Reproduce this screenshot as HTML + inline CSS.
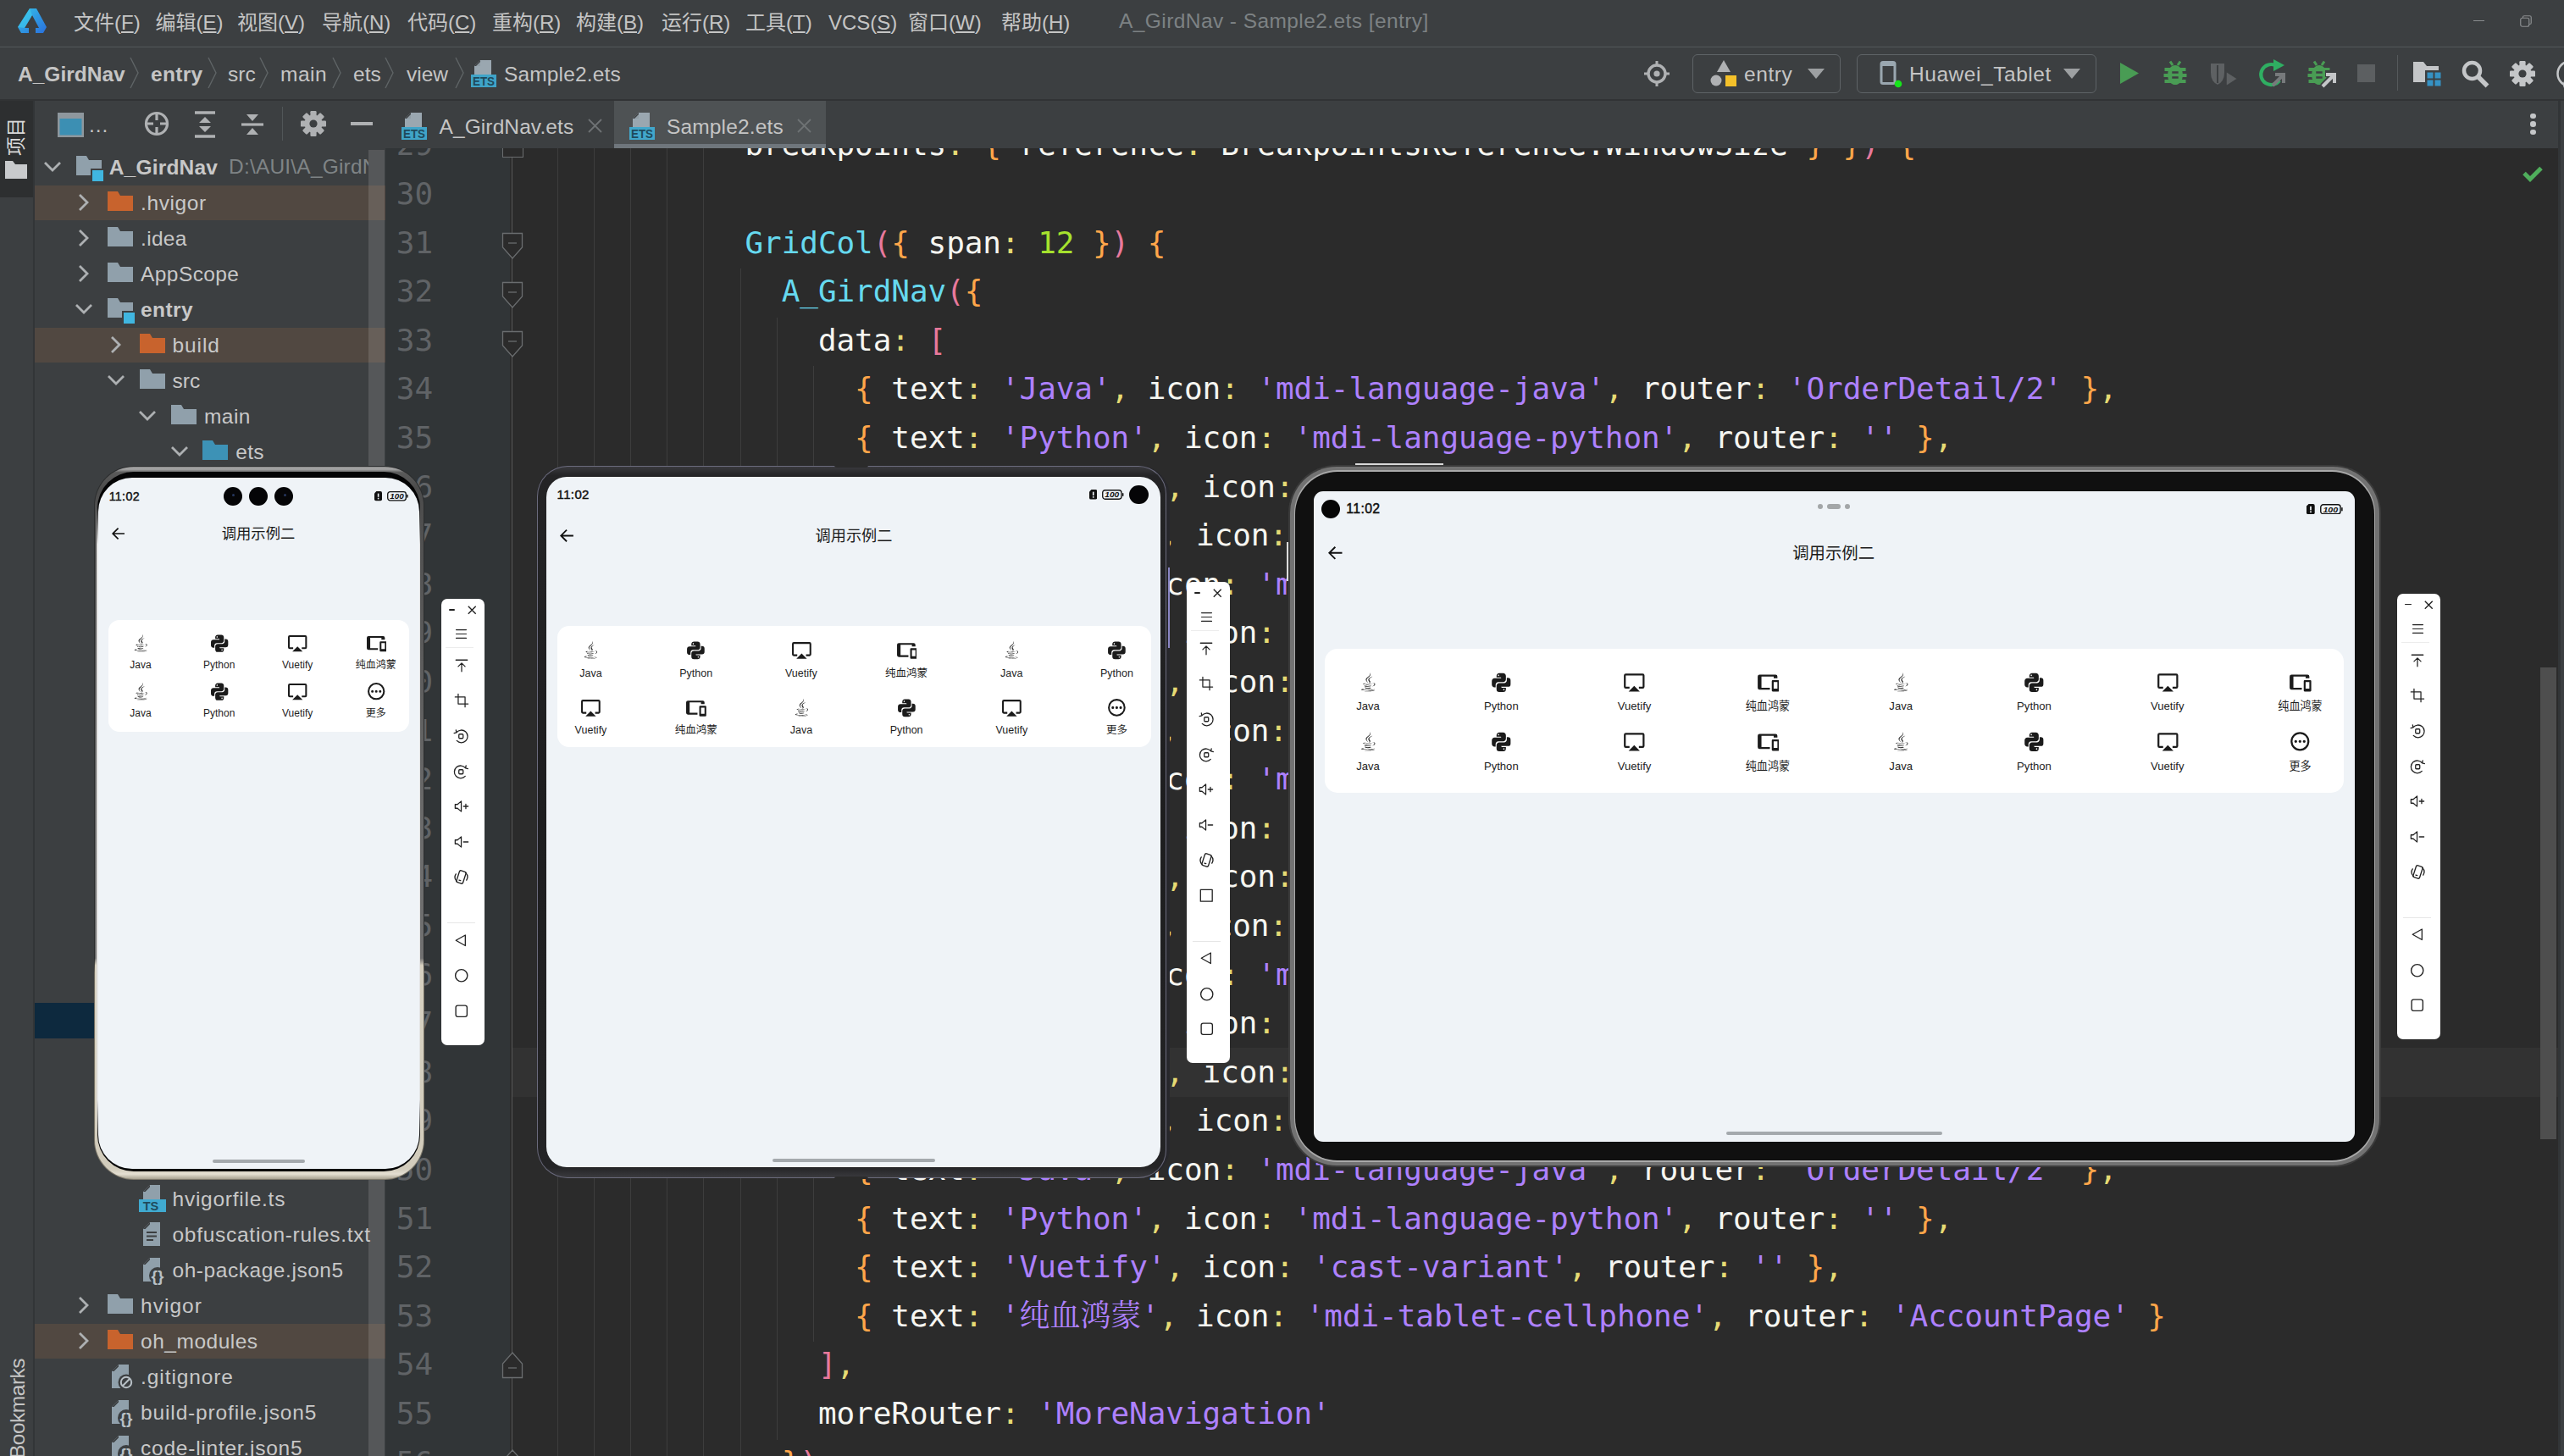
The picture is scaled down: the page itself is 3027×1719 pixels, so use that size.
<!DOCTYPE html>
<html lang="zh"><head><meta charset="utf-8"><title>A_GirdNav - Sample2.ets [entry]</title>
<style>
html,body{margin:0;padding:0}
body{width:3027px;height:1719px;overflow:hidden;background:#2b2b2b;position:relative;font-family:"Liberation Sans","Noto Sans CJK SC",sans-serif;}
div,span.t,svg.a{position:absolute;box-sizing:border-box}
span.t{white-space:pre}
.code{font-family:"DejaVu Sans Mono","Liberation Mono","Noto Serif CJK SC",monospace;font-size:36px;line-height:57.6px;letter-spacing:-0.074px;white-space:pre;color:#f6f6f1;position:absolute}
.w{color:#f6f6f1}.c{color:#66d9ef}.o{color:#ffa64a}.p{color:#e8799c}.y{color:#e6db74}.s{color:#ae81ff}.g{color:#a6e22e}
.ln{font-family:"DejaVu Sans Mono","Liberation Mono","Noto Serif CJK SC",monospace;font-size:36px;line-height:57.6px;letter-spacing:-0.074px;color:#606366;position:absolute;white-space:pre;text-align:right;width:60px}
.lab{position:absolute;text-align:center;white-space:pre;color:#1e1e1e}
</style></head><body>

<div id="editor" style="left:455px;top:175px;width:2565px;height:1544px;overflow:hidden;background:#2b2b2b">
<div style="left:0px;top:0px;width:146.5px;height:1544px;background:#313537"></div>
<div style="left:150px;top:1061.5px;width:2415px;height:58px;background:#323232"></div>
<div style="left:203px;top:-88.2px;width:1px;height:1728.0px;background:#3d3d3d"></div>
<div style="left:246px;top:-88.2px;width:1px;height:1728.0px;background:#3d3d3d"></div>
<div style="left:289px;top:-88.2px;width:1px;height:1728.0px;background:#3d3d3d"></div>
<div style="left:332px;top:-88.2px;width:1px;height:1728.0px;background:#3d3d3d"></div>
<div style="left:375px;top:-88.2px;width:1px;height:1728.0px;background:#3d3d3d"></div>
<div style="left:419px;top:142.2px;width:1px;height:1497.6px;background:#3d3d3d"></div>
<div style="left:462px;top:199.8px;width:1px;height:1324.8000000000002px;background:#3d3d3d"></div>
<div style="left:505px;top:257.4px;width:1px;height:1152.0px;background:#3d3d3d"></div>
<div style="left:149.10000000000002px;top:0px;width:1.4px;height:1544px;background:#575757"></div>
<svg class="a" style="left:136.79999999999995px;top:99.40000000000003px;" width="26" height="34" viewBox="0 0 26 34"><path d="M1.5 1.5H24.5V18L13 31L1.5 18Z" fill="#2b2b2b" stroke="#6a6d6f" stroke-width="1.3"/><path d="M8 13H18" stroke="#6a6d6f" stroke-width="1.3"/></svg>
<svg class="a" style="left:136.79999999999995px;top:157.0px;" width="26" height="34" viewBox="0 0 26 34"><path d="M1.5 1.5H24.5V18L13 31L1.5 18Z" fill="#2b2b2b" stroke="#6a6d6f" stroke-width="1.3"/><path d="M8 13H18" stroke="#6a6d6f" stroke-width="1.3"/></svg>
<svg class="a" style="left:136.79999999999995px;top:214.60000000000002px;" width="26" height="34" viewBox="0 0 26 34"><path d="M1.5 1.5H24.5V18L13 31L1.5 18Z" fill="#2b2b2b" stroke="#6a6d6f" stroke-width="1.3"/><path d="M8 13H18" stroke="#6a6d6f" stroke-width="1.3"/></svg>
<div style="left:138px;top:-25px;width:25px;height:35.5px;border:1.3px solid #6a6d6f;background:#2b2b2b"></div>
<svg class="a" style="left:136.79999999999995px;top:1418.7px;" width="26" height="34" viewBox="0 0 26 34"><path d="M1.5 32.5H24.5V16L13 3L1.5 16Z" fill="#2b2b2b" stroke="#6a6d6f" stroke-width="1.3"/><path d="M8 21H18" stroke="#6a6d6f" stroke-width="1.3"/></svg>
<svg class="a" style="left:136.79999999999995px;top:1533.9px;" width="26" height="34" viewBox="0 0 26 34"><path d="M1.5 32.5H24.5V16L13 3L1.5 16Z" fill="#2b2b2b" stroke="#6a6d6f" stroke-width="1.3"/><path d="M8 21H18" stroke="#6a6d6f" stroke-width="1.3"/></svg>
<div class="ln" style="left:-4px;top:-32.70px">29</div>
<div class="ln" style="left:-4px;top:24.90px">30</div>
<div class="ln" style="left:-4px;top:82.50px">31</div>
<div class="ln" style="left:-4px;top:140.10px">32</div>
<div class="ln" style="left:-4px;top:197.70px">33</div>
<div class="ln" style="left:-4px;top:255.30px">34</div>
<div class="ln" style="left:-4px;top:312.90px">35</div>
<div class="ln" style="left:-4px;top:370.50px">36</div>
<div class="ln" style="left:-4px;top:428.10px">37</div>
<div class="ln" style="left:-4px;top:485.70px">38</div>
<div class="ln" style="left:-4px;top:543.30px">39</div>
<div class="ln" style="left:-4px;top:600.90px">40</div>
<div class="ln" style="left:-4px;top:658.50px">41</div>
<div class="ln" style="left:-4px;top:716.10px">42</div>
<div class="ln" style="left:-4px;top:773.70px">43</div>
<div class="ln" style="left:-4px;top:831.30px">44</div>
<div class="ln" style="left:-4px;top:888.90px">45</div>
<div class="ln" style="left:-4px;top:946.50px">46</div>
<div class="ln" style="left:-4px;top:1004.10px">47</div>
<div class="ln" style="left:-4px;top:1061.70px">48</div>
<div class="ln" style="left:-4px;top:1119.30px">49</div>
<div class="ln" style="left:-4px;top:1176.90px">50</div>
<div class="ln" style="left:-4px;top:1234.50px">51</div>
<div class="ln" style="left:-4px;top:1292.10px">52</div>
<div class="ln" style="left:-4px;top:1349.70px">53</div>
<div class="ln" style="left:-4px;top:1407.30px">54</div>
<div class="ln" style="left:-4px;top:1464.90px">55</div>
<div class="ln" style="left:-4px;top:1522.50px">56</div>
<div class="ln" style="left:-4px;top:1580.10px">57</div>
<div class="code" style="left:424.50px;top:-32.70px"><span class="w">breakpoints</span><span class="y">:</span> <span class="o">{</span> <span class="w">reference</span><span class="y">:</span> <span class="w">BreakpointsReference.WindowSize</span> <span class="o">}</span> <span class="o">}</span><span class="p">)</span> <span class="o">{</span></div>
<div class="code" style="left:424.50px;top:82.50px"><span class="c">GridCol</span><span class="p">(</span><span class="o">{</span> <span class="w">span</span><span class="y">:</span> <span class="g">12</span> <span class="o">}</span><span class="p">)</span> <span class="o">{</span></div>
<div class="code" style="left:467.70px;top:140.10px"><span class="c">A_GirdNav</span><span class="p">(</span><span class="o">{</span></div>
<div class="code" style="left:510.90px;top:197.70px"><span class="w">data</span><span class="y">:</span> <span class="p">[</span></div>
<div class="code" style="left:554.10px;top:255.30px"><span class="o">{</span> <span class="w">text</span><span class="y">:</span> <span class="s">&#x27;Java&#x27;</span><span class="y">,</span> <span class="w">icon</span><span class="y">:</span> <span class="s">&#x27;mdi-language-java&#x27;</span><span class="y">,</span> <span class="w">router</span><span class="y">:</span> <span class="s">&#x27;OrderDetail/2&#x27;</span> <span class="o">}</span><span class="y">,</span></div>
<div class="code" style="left:554.10px;top:312.90px"><span class="o">{</span> <span class="w">text</span><span class="y">:</span> <span class="s">&#x27;Python&#x27;</span><span class="y">,</span> <span class="w">icon</span><span class="y">:</span> <span class="s">&#x27;mdi-language-python&#x27;</span><span class="y">,</span> <span class="w">router</span><span class="y">:</span> <span class="s">&#x27;&#x27;</span> <span class="o">}</span><span class="y">,</span></div>
<div class="code" style="left:554.10px;top:370.50px"><span class="o">{</span> <span class="w">text</span><span class="y">:</span> <span class="s">&#x27;Vuetify&#x27;</span><span class="y">,</span> <span class="w">icon</span><span class="y">:</span> <span class="s">&#x27;cast-variant&#x27;</span><span class="y">,</span> <span class="w">router</span><span class="y">:</span> <span class="s">&#x27;&#x27;</span> <span class="o">}</span><span class="y">,</span></div>
<div class="code" style="left:554.10px;top:428.10px"><span class="o">{</span> <span class="w">text</span><span class="y">:</span> <span class="s">&#x27;纯血鸿蒙&#x27;</span><span class="y">,</span> <span class="w">icon</span><span class="y">:</span> <span class="s">&#x27;mdi-tablet-cellphone&#x27;</span><span class="y">,</span> <span class="w">router</span><span class="y">:</span> <span class="s">&#x27;AccountPage&#x27;</span> <span class="o">}</span><span class="y">,</span></div>
<div class="code" style="left:554.10px;top:485.70px"><span class="o">{</span> <span class="w">text</span><span class="y">:</span> <span class="s">&#x27;Java&#x27;</span><span class="y">,</span> <span class="w">icon</span><span class="y">:</span> <span class="s">&#x27;mdi-language-java&#x27;</span><span class="y">,</span> <span class="w">router</span><span class="y">:</span> <span class="s">&#x27;OrderDetail/2&#x27;</span> <span class="o">}</span><span class="y">,</span></div>
<div class="code" style="left:554.10px;top:543.30px"><span class="o">{</span> <span class="w">text</span><span class="y">:</span> <span class="s">&#x27;Python&#x27;</span><span class="y">,</span> <span class="w">icon</span><span class="y">:</span> <span class="s">&#x27;mdi-language-python&#x27;</span><span class="y">,</span> <span class="w">router</span><span class="y">:</span> <span class="s">&#x27;&#x27;</span> <span class="o">}</span><span class="y">,</span></div>
<div class="code" style="left:554.10px;top:600.90px"><span class="o">{</span> <span class="w">text</span><span class="y">:</span> <span class="s">&#x27;Vuetify&#x27;</span><span class="y">,</span> <span class="w">icon</span><span class="y">:</span> <span class="s">&#x27;cast-variant&#x27;</span><span class="y">,</span> <span class="w">router</span><span class="y">:</span> <span class="s">&#x27;&#x27;</span> <span class="o">}</span><span class="y">,</span></div>
<div class="code" style="left:554.10px;top:658.50px"><span class="o">{</span> <span class="w">text</span><span class="y">:</span> <span class="s">&#x27;纯血鸿蒙&#x27;</span><span class="y">,</span> <span class="w">icon</span><span class="y">:</span> <span class="s">&#x27;mdi-tablet-cellphone&#x27;</span><span class="y">,</span> <span class="w">router</span><span class="y">:</span> <span class="s">&#x27;AccountPage&#x27;</span> <span class="o">}</span><span class="y">,</span></div>
<div class="code" style="left:554.10px;top:716.10px"><span class="o">{</span> <span class="w">text</span><span class="y">:</span> <span class="s">&#x27;Java&#x27;</span><span class="y">,</span> <span class="w">icon</span><span class="y">:</span> <span class="s">&#x27;mdi-language-java&#x27;</span><span class="y">,</span> <span class="w">router</span><span class="y">:</span> <span class="s">&#x27;OrderDetail/2&#x27;</span> <span class="o">}</span><span class="y">,</span></div>
<div class="code" style="left:554.10px;top:773.70px"><span class="o">{</span> <span class="w">text</span><span class="y">:</span> <span class="s">&#x27;Python&#x27;</span><span class="y">,</span> <span class="w">icon</span><span class="y">:</span> <span class="s">&#x27;mdi-language-python&#x27;</span><span class="y">,</span> <span class="w">router</span><span class="y">:</span> <span class="s">&#x27;&#x27;</span> <span class="o">}</span><span class="y">,</span></div>
<div class="code" style="left:554.10px;top:831.30px"><span class="o">{</span> <span class="w">text</span><span class="y">:</span> <span class="s">&#x27;Vuetify&#x27;</span><span class="y">,</span> <span class="w">icon</span><span class="y">:</span> <span class="s">&#x27;cast-variant&#x27;</span><span class="y">,</span> <span class="w">router</span><span class="y">:</span> <span class="s">&#x27;&#x27;</span> <span class="o">}</span><span class="y">,</span></div>
<div class="code" style="left:554.10px;top:888.90px"><span class="o">{</span> <span class="w">text</span><span class="y">:</span> <span class="s">&#x27;纯血鸿蒙&#x27;</span><span class="y">,</span> <span class="w">icon</span><span class="y">:</span> <span class="s">&#x27;mdi-tablet-cellphone&#x27;</span><span class="y">,</span> <span class="w">router</span><span class="y">:</span> <span class="s">&#x27;AccountPage&#x27;</span> <span class="o">}</span><span class="y">,</span></div>
<div class="code" style="left:554.10px;top:946.50px"><span class="o">{</span> <span class="w">text</span><span class="y">:</span> <span class="s">&#x27;Java&#x27;</span><span class="y">,</span> <span class="w">icon</span><span class="y">:</span> <span class="s">&#x27;mdi-language-java&#x27;</span><span class="y">,</span> <span class="w">router</span><span class="y">:</span> <span class="s">&#x27;OrderDetail/2&#x27;</span> <span class="o">}</span><span class="y">,</span></div>
<div class="code" style="left:554.10px;top:1004.10px"><span class="o">{</span> <span class="w">text</span><span class="y">:</span> <span class="s">&#x27;Python&#x27;</span><span class="y">,</span> <span class="w">icon</span><span class="y">:</span> <span class="s">&#x27;mdi-language-python&#x27;</span><span class="y">,</span> <span class="w">router</span><span class="y">:</span> <span class="s">&#x27;&#x27;</span> <span class="o">}</span><span class="y">,</span></div>
<div class="code" style="left:554.10px;top:1061.70px"><span class="o">{</span> <span class="w">text</span><span class="y">:</span> <span class="s">&#x27;Vuetify&#x27;</span><span class="y">,</span> <span class="w">icon</span><span class="y">:</span> <span class="s">&#x27;cast-variant&#x27;</span><span class="y">,</span> <span class="w">router</span><span class="y">:</span> <span class="s">&#x27;&#x27;</span> <span class="o">}</span><span class="y">,</span></div>
<div class="code" style="left:554.10px;top:1119.30px"><span class="o">{</span> <span class="w">text</span><span class="y">:</span> <span class="s">&#x27;纯血鸿蒙&#x27;</span><span class="y">,</span> <span class="w">icon</span><span class="y">:</span> <span class="s">&#x27;mdi-tablet-cellphone&#x27;</span><span class="y">,</span> <span class="w">router</span><span class="y">:</span> <span class="s">&#x27;AccountPage&#x27;</span> <span class="o">}</span><span class="y">,</span></div>
<div class="code" style="left:554.10px;top:1176.90px"><span class="o">{</span> <span class="w">text</span><span class="y">:</span> <span class="s">&#x27;Java&#x27;</span><span class="y">,</span> <span class="w">icon</span><span class="y">:</span> <span class="s">&#x27;mdi-language-java&#x27;</span><span class="y">,</span> <span class="w">router</span><span class="y">:</span> <span class="s">&#x27;OrderDetail/2&#x27;</span> <span class="o">}</span><span class="y">,</span></div>
<div class="code" style="left:554.10px;top:1234.50px"><span class="o">{</span> <span class="w">text</span><span class="y">:</span> <span class="s">&#x27;Python&#x27;</span><span class="y">,</span> <span class="w">icon</span><span class="y">:</span> <span class="s">&#x27;mdi-language-python&#x27;</span><span class="y">,</span> <span class="w">router</span><span class="y">:</span> <span class="s">&#x27;&#x27;</span> <span class="o">}</span><span class="y">,</span></div>
<div class="code" style="left:554.10px;top:1292.10px"><span class="o">{</span> <span class="w">text</span><span class="y">:</span> <span class="s">&#x27;Vuetify&#x27;</span><span class="y">,</span> <span class="w">icon</span><span class="y">:</span> <span class="s">&#x27;cast-variant&#x27;</span><span class="y">,</span> <span class="w">router</span><span class="y">:</span> <span class="s">&#x27;&#x27;</span> <span class="o">}</span><span class="y">,</span></div>
<div class="code" style="left:554.10px;top:1349.70px"><span class="o">{</span> <span class="w">text</span><span class="y">:</span> <span class="s">&#x27;纯血鸿蒙&#x27;</span><span class="y">,</span> <span class="w">icon</span><span class="y">:</span> <span class="s">&#x27;mdi-tablet-cellphone&#x27;</span><span class="y">,</span> <span class="w">router</span><span class="y">:</span> <span class="s">&#x27;AccountPage&#x27;</span> <span class="o">}</span></div>
<div class="code" style="left:510.90px;top:1407.30px"><span class="p">]</span><span class="y">,</span></div>
<div class="code" style="left:510.90px;top:1464.90px"><span class="w">moreRouter</span><span class="y">:</span> <span class="s">&#x27;MoreNavigation&#x27;</span></div>
<div class="code" style="left:467.70px;top:1522.50px"><span class="o">}</span><span class="p">)</span></div>
<div style="left:2544px;top:613px;width:19px;height:557px;background:#4e4e4e"></div>
<svg class="a" style="left:2522px;top:19px;" width="26" height="22" viewBox="0 0 26 22"><path d="M3 10.5L10 17.5L23 4.5" fill="none" stroke="#4fae5c" stroke-width="5"/></svg>
</div>
<div style="left:0px;top:0px;width:3027px;height:55px;background:#3c3f41"></div>
<div style="left:0px;top:55px;width:3027px;height:1px;background:#53585a"></div>
<div style="left:0px;top:56px;width:3027px;height:62px;background:#3c3f41"></div>
<div style="left:0px;top:117px;width:3027px;height:2px;background:#313335"></div>
<svg class="a" style="left:20px;top:8px;" width="36" height="32" viewBox="0 0 36 32"><defs><linearGradient id="lg1" x1="0" y1="0" x2="1" y2="1"><stop offset="0" stop-color="#35c3e8"/><stop offset="1" stop-color="#2a6fdc"/></linearGradient></defs>
<path d="M15 2L23 2L35 24L31 31L22 31L22 25L26 25L18 10L9 25L14 25L14 31L5 31L1 24Z" fill="url(#lg1)"/><path d="M15 2L18 10L9 25L1 24Z" fill="#3fd0ee" opacity=".55"/></svg>
<span class="t" style="left:87px;top:7.20px;line-height:40px;font-size:24px;color:#c5c5c5;">文件(<u>F</u>)</span>
<span class="t" style="left:183.5px;top:7.20px;line-height:40px;font-size:24px;color:#c5c5c5;">编辑(<u>E</u>)</span>
<span class="t" style="left:280px;top:7.20px;line-height:40px;font-size:24px;color:#c5c5c5;">视图(<u>V</u>)</span>
<span class="t" style="left:380px;top:7.20px;line-height:40px;font-size:24px;color:#c5c5c5;">导航(<u>N</u>)</span>
<span class="t" style="left:481px;top:7.20px;line-height:40px;font-size:24px;color:#c5c5c5;">代码(<u>C</u>)</span>
<span class="t" style="left:581px;top:7.20px;line-height:40px;font-size:24px;color:#c5c5c5;">重构(<u>R</u>)</span>
<span class="t" style="left:680px;top:7.20px;line-height:40px;font-size:24px;color:#c5c5c5;">构建(<u>B</u>)</span>
<span class="t" style="left:781px;top:7.20px;line-height:40px;font-size:24px;color:#c5c5c5;">运行(<u>R</u>)</span>
<span class="t" style="left:880px;top:7.20px;line-height:40px;font-size:24px;color:#c5c5c5;">工具(<u>T</u>)</span>
<span class="t" style="left:978px;top:7.20px;line-height:40px;font-size:24px;color:#c5c5c5;">VCS(<u>S</u>)</span>
<span class="t" style="left:1072px;top:7.20px;line-height:40px;font-size:24px;color:#c5c5c5;">窗口(<u>W</u>)</span>
<span class="t" style="left:1182px;top:7.20px;line-height:40px;font-size:24px;color:#c5c5c5;">帮助(<u>H</u>)</span>
<span class="t" style="left:1321px;top:5.20px;line-height:40px;font-size:24.5px;color:#7d8284;letter-spacing:0.42px">A_GirdNav - Sample2.ets [entry]</span>
<div style="left:2920px;top:24px;width:13px;height:1px;background:#8a8d8f"></div>
<svg class="a" style="left:2975px;top:18px;" width="14" height="14" viewBox="0 0 14 14"><rect x="0.75" y="3.25" width="10" height="10" rx="2" fill="none" stroke="#8a8d8f" stroke-width="1.2"/><path d="M3.5 3V2.2Q3.5 0.75 5 0.75H11.5Q13.25 0.75 13.25 2.5V9Q13.25 10.5 11.8 10.5H11" fill="none" stroke="#8a8d8f" stroke-width="1.2"/></svg>
<span class="t" style="left:21px;top:68.20px;line-height:40px;font-size:24.5px;color:#c5c5c5;font-weight:bold">A_GirdNav</span>
<svg class="a" style="left:153px;top:67px;" width="11" height="38" viewBox="0 0 11 38"><path d="M1 1L10 19L1 37" fill="none" stroke="#5f6466" stroke-width="1.4"/></svg>
<span class="t" style="left:178px;top:68.20px;line-height:40px;font-size:24.5px;color:#c5c5c5;font-weight:bold;letter-spacing:0.3px">entry</span>
<svg class="a" style="left:245px;top:67px;" width="11" height="38" viewBox="0 0 11 38"><path d="M1 1L10 19L1 37" fill="none" stroke="#5f6466" stroke-width="1.4"/></svg>
<span class="t" style="left:269px;top:68.20px;line-height:40px;font-size:24.5px;color:#c5c5c5;">src</span>
<svg class="a" style="left:306px;top:67px;" width="11" height="38" viewBox="0 0 11 38"><path d="M1 1L10 19L1 37" fill="none" stroke="#5f6466" stroke-width="1.4"/></svg>
<span class="t" style="left:331px;top:68.20px;line-height:40px;font-size:24.5px;color:#c5c5c5;letter-spacing:0.5px">main</span>
<svg class="a" style="left:392px;top:67px;" width="11" height="38" viewBox="0 0 11 38"><path d="M1 1L10 19L1 37" fill="none" stroke="#5f6466" stroke-width="1.4"/></svg>
<span class="t" style="left:417px;top:68.20px;line-height:40px;font-size:24.5px;color:#c5c5c5;">ets</span>
<svg class="a" style="left:454px;top:67px;" width="11" height="38" viewBox="0 0 11 38"><path d="M1 1L10 19L1 37" fill="none" stroke="#5f6466" stroke-width="1.4"/></svg>
<span class="t" style="left:480px;top:68.20px;line-height:40px;font-size:24.5px;color:#c5c5c5;">view</span>
<svg class="a" style="left:537px;top:67px;" width="11" height="38" viewBox="0 0 11 38"><path d="M1 1L10 19L1 37" fill="none" stroke="#5f6466" stroke-width="1.4"/></svg>
<svg class="a" style="left:556px;top:71px;" width="30" height="32" viewBox="0 0 30 32"><path d="M11 0H24V17H4V7Z" fill="#9aa7b0"/><path d="M11 0V7H4Z" fill="#3c3f41"/><path d="M11.5 1.5V8H5Z" fill="#9aa7b0" opacity=".9"/>
<rect x="0" y="17" width="30" height="15" fill="#40b6e0" opacity=".85"/><text x="15" y="30" font-family="Liberation Sans,sans-serif" font-size="14.5" font-weight="bold" fill="#1f4a5c" text-anchor="middle" textLength="26" lengthAdjust="spacingAndGlyphs">ETS</text></svg>
<span class="t" style="left:595px;top:68.20px;line-height:40px;font-size:24.5px;color:#c5c5c5;letter-spacing:0.15px">Sample2.ets</span>
<svg class="a" style="left:1940px;top:71px;" width="32" height="32" viewBox="0 0 32 32"><circle cx="16" cy="16" r="10" fill="none" stroke="#afb1b3" stroke-width="3.4"/><circle cx="16" cy="16" r="3.6" fill="#afb1b3"/><path d="M16 1V6M16 26V31M1 16H6M26 16H31" stroke="#afb1b3" stroke-width="3"/></svg>
<div style="left:1998px;top:64px;width:175px;height:46px;border:1.5px solid #5e6366;border-radius:6px"></div>
<svg class="a" style="left:2018px;top:70px;" width="34" height="34" viewBox="0 0 34 34"><path d="M17 1L25 15H9Z" fill="#afb1b3"/><circle cx="8" cy="25" r="6.5" fill="#afb1b3"/><rect x="19" y="19" width="13" height="13" fill="#f4c12a"/></svg>
<span class="t" style="left:2059px;top:68.20px;line-height:40px;font-size:24.5px;color:#c5c5c5;letter-spacing:0.6px">entry</span>
<svg class="a" style="left:2134px;top:81px;" width="20" height="12" viewBox="0 0 20 12"><path d="M0 0H20L10 12Z" fill="#9da0a2"/></svg>
<div style="left:2192px;top:64px;width:283px;height:46px;border:1.5px solid #5e6366;border-radius:6px"></div>
<svg class="a" style="left:2219px;top:72px;" width="30" height="34" viewBox="0 0 30 34"><rect x="2" y="1.5" width="16" height="25" rx="2" fill="none" stroke="#9aa7b0" stroke-width="3"/><rect x="3" y="3" width="14" height="3" fill="#9aa7b0"/><circle cx="22" cy="27" r="4.3" fill="#17e41b"/></svg>
<span class="t" style="left:2254px;top:68.20px;line-height:40px;font-size:24.5px;color:#c5c5c5;letter-spacing:0.55px">Huawei_Tablet</span>
<svg class="a" style="left:2436px;top:81px;" width="20" height="12" viewBox="0 0 20 12"><path d="M0 0H20L10 12Z" fill="#9da0a2"/></svg>
<svg class="a" style="left:2502px;top:73px;" width="24" height="27" viewBox="0 0 24 27"><path d="M1 1L23 13.5L1 26Z" fill="#499c54"/></svg>
<svg class="a" style="left:2552px;top:70px;" width="32" height="32" viewBox="0 0 32 32"><path d="M10 2.5L13 7M22 2.5L19 7" stroke="#499c54" stroke-width="3"/><path d="M3.5 12H28.5M2.5 19H29.5M3.5 26H28.5" stroke="#499c54" stroke-width="4"/><ellipse cx="16" cy="18.5" rx="9" ry="11.5" fill="#499c54"/><path d="M12.3 15.5H19.7M12.3 21.5H19.7" stroke="#3c3f41" stroke-width="2.6"/></svg>
<svg class="a" style="left:2608px;top:72px;" width="36" height="32" viewBox="0 0 36 32"><path d="M2 3H18V14Q18 24 10 28Q2 24 2 14Z" fill="#5e6163"/><path d="M10 5V26" stroke="#3c3f41" stroke-width="2"/><path d="M20 12L34 21L20 30Z" fill="#5e6163" stroke="#3c3f41" stroke-width="1.5"/></svg>
<svg class="a" style="left:2664px;top:70px;" width="36" height="34" viewBox="0 0 36 34"><path d="M22 7A12 12 0 1 0 27 25" fill="none" stroke="#2fae62" stroke-width="4.2"/><path d="M20 0L33 7L20 14Z" fill="#2fae62"/><path d="M19 31L31 19M22 18H32V28" stroke="#777a7c" stroke-width="4" fill="none"/></svg>
<svg class="a" style="left:2722px;top:70px;" width="38" height="34" viewBox="0 0 38 34"><path d="M10 2.5L13 7M22 2.5L19 7" stroke="#499c54" stroke-width="3"/><path d="M3.5 12H28.5M2.5 19H29.5M3.5 26H28.5" stroke="#499c54" stroke-width="4"/><ellipse cx="16" cy="18.5" rx="9" ry="11.5" fill="#499c54"/><path d="M12.3 15.5H19.7M12.3 21.5H19.7" stroke="#3c3f41" stroke-width="2.6"/><path d="M20 32L33 19M23 17H35V29" stroke="#3c3f41" stroke-width="8" fill="none"/><path d="M20 32L33 19M24 18H34V28" stroke="#c4c6c8" stroke-width="4" fill="none"/></svg>
<div style="left:2783px;top:76px;width:21px;height:21px;background:#5c5f61"></div>
<div style="left:2830px;top:65px;width:1px;height:42px;background:#55595b"></div>
<svg class="a" style="left:2848px;top:72px;" width="36" height="32" viewBox="0 0 36 32"><path d="M1 1H13L17 6H31V25H1Z" fill="#c4c6c8"/><rect x="15" y="11" width="20" height="20" fill="#3c3f41"/><rect x="17.5" y="13.5" width="7" height="7" fill="#3592c4"/><rect x="26.5" y="13.5" width="7" height="7" fill="#3592c4"/><rect x="17.5" y="22.5" width="7" height="7" fill="#3592c4"/><rect x="26.5" y="22.5" width="7" height="7" fill="#3592c4"/></svg>
<svg class="a" style="left:2905px;top:70px;" width="34" height="34" viewBox="0 0 34 34"><circle cx="13.5" cy="13.5" r="9.5" fill="none" stroke="#c4c6c8" stroke-width="4.5"/><path d="M20.5 20.5L31.5 31.5" stroke="#c4c6c8" stroke-width="5.5"/></svg>
<svg class="a" style="left:2962px;top:71px;" width="32" height="32" viewBox="0 0 32 32"><g transform="translate(16,16)"><g fill="#c4c6c8"><rect x="-3.6" y="-15" width="7.2" height="30" rx="1.2" transform="rotate(0)"/><rect x="-3.6" y="-15" width="7.2" height="30" rx="1.2" transform="rotate(45)"/><rect x="-3.6" y="-15" width="7.2" height="30" rx="1.2" transform="rotate(90)"/><rect x="-3.6" y="-15" width="7.2" height="30" rx="1.2" transform="rotate(135)"/></g><circle r="10.5" fill="#c4c6c8"/><circle r="4.6" fill="#3c3f41"/></g></svg>
<svg class="a" style="left:3017px;top:70px;" width="12" height="34" viewBox="0 0 12 34"><circle cx="17" cy="17" r="14.5" fill="none" stroke="#c4c6c8" stroke-width="2.5"/><circle cx="17" cy="30" r="8" fill="#c4c6c8"/></svg>
<div style="left:0px;top:119px;width:39px;height:1600px;background:#3c3f41"></div>
<div style="left:0px;top:119px;width:39px;height:114px;background:#2d2f30"></div>
<div style="left:39px;top:119px;width:2px;height:1600px;background:#323537"></div>
<span class="t" style="left:0px;top:138px;width:39px;height:46px;writing-mode:vertical-rl;text-orientation:sideways;transform:rotate(180deg);font-size:22.5px;line-height:39px;color:#d8d8d8;text-align:center">项目</span>
<svg class="a" style="left:6px;top:190px;" width="26" height="21" viewBox="0 0 26 21"><path d="M0 0H9L12 4H26V21H0Z" fill="#c8cacc"/></svg>
<span class="t" style="left:1px;top:1604px;width:39px;height:118px;writing-mode:vertical-rl;text-orientation:sideways;transform:rotate(180deg);font-size:24.5px;line-height:39px;color:#c5c5c5;letter-spacing:-0.5px">Bookmarks</span>
<div style="left:41px;top:119px;width:414px;height:1600px;background:#3c3f41"></div>
<svg class="a" style="left:68px;top:133px;" width="31" height="29" viewBox="0 0 31 29"><rect x="1.25" y="1.25" width="28.5" height="26.5" fill="#3c8fb3" stroke="#8e979d" stroke-width="2.5"/><rect x="1" y="1" width="29" height="6" fill="#8e979d"/></svg>
<span class="t" style="left:105px;top:128.20px;line-height:40px;font-size:24.5px;color:#c5c5c5;letter-spacing:1px">...</span>
<svg class="a" style="left:170px;top:131px;" width="30" height="30" viewBox="0 0 30 30"><circle cx="15" cy="15" r="12.5" fill="none" stroke="#afb1b3" stroke-width="3.2"/><path d="M15 2V11M15 19V28M2 15H11M19 15H28" stroke="#afb1b3" stroke-width="3.2"/></svg>
<svg class="a" style="left:228px;top:131px;" width="28" height="32" viewBox="0 0 28 32"><path d="M2 2H26M2 30H26" stroke="#afb1b3" stroke-width="3.6"/><path d="M14 7L21 14H7ZM14 25L21 18H7Z" fill="#afb1b3"/></svg>
<svg class="a" style="left:284px;top:131px;" width="28" height="32" viewBox="0 0 28 32"><path d="M1 16H27" stroke="#afb1b3" stroke-width="3.2"/><path d="M14 12L21 4H7ZM14 20L21 28H7Z" fill="#afb1b3"/></svg>
<div style="left:333px;top:126px;width:1px;height:40px;background:#515658"></div>
<svg class="a" style="left:354px;top:130px;" width="32" height="32" viewBox="0 0 32 32"><g transform="translate(16,16)"><g fill="#afb1b3"><rect x="-3.6" y="-15" width="7.2" height="30" rx="1.2" transform="rotate(0)"/><rect x="-3.6" y="-15" width="7.2" height="30" rx="1.2" transform="rotate(45)"/><rect x="-3.6" y="-15" width="7.2" height="30" rx="1.2" transform="rotate(90)"/><rect x="-3.6" y="-15" width="7.2" height="30" rx="1.2" transform="rotate(135)"/></g><circle r="10.5" fill="#afb1b3"/><circle r="4.6" fill="#3c3f41"/></g></svg>
<div style="left:414px;top:144px;width:26px;height:4px;background:#afb1b3"></div>
<div style="left:41px;top:1184px;width:414px;height:42px;background:#0d293e"></div>
<svg class="a" style="left:50.5px;top:190.0px;" width="22" height="14" viewBox="0 0 22 14"><path d="M2 2L11 11L20 2" fill="none" stroke="#adb0b2" stroke-width="2.8"/></svg>
<svg class="a" style="left:90.0px;top:184.0px;" width="34" height="32" viewBox="0 0 34 32"><path d="M0 0H12L15 5H30V23H0Z" fill="#90a0ab"/><rect x="17" y="15" width="16" height="16" fill="#3c3f41"/><rect x="19" y="17" width="13" height="13" fill="#40b6e0"/></svg>
<span class="t" style="left:128.7px;top:177.20px;line-height:42px;font-size:24.5px;color:#c8c8c8;font-weight:bold;letter-spacing:0.2px">A_GirdNav</span>
<span class="t" style="left:270px;top:176px;line-height:42px;font-size:24.5px;color:#7f8486;width:165px;overflow:hidden;letter-spacing:0.2px">D:\AUI\A_GirdNav</span>
<div style="left:41px;top:219px;width:414px;height:41px;background:#514841"></div>
<svg class="a" style="left:92.0px;top:228.0px;" width="14" height="22" viewBox="0 0 14 22"><path d="M2 2L11 11L2 20" fill="none" stroke="#adb0b2" stroke-width="2.8"/></svg>
<svg class="a" style="left:127.3px;top:226.0px;" width="34" height="32" viewBox="0 0 34 32"><path d="M0 0H12L15 5H30V23H0Z" fill="#c8632d"/></svg>
<span class="t" style="left:166.1px;top:219.20px;line-height:42px;font-size:24.5px;color:#c8c8c8;letter-spacing:0.6px">.hvigor</span>
<svg class="a" style="left:92.0px;top:270.0px;" width="14" height="22" viewBox="0 0 14 22"><path d="M2 2L11 11L2 20" fill="none" stroke="#adb0b2" stroke-width="2.8"/></svg>
<svg class="a" style="left:127.3px;top:268.0px;" width="34" height="32" viewBox="0 0 34 32"><path d="M0 0H12L15 5H30V23H0Z" fill="#90a0ab"/></svg>
<span class="t" style="left:166.1px;top:261.20px;line-height:42px;font-size:24.5px;color:#c8c8c8;letter-spacing:0.3px">.idea</span>
<svg class="a" style="left:92.0px;top:312.0px;" width="14" height="22" viewBox="0 0 14 22"><path d="M2 2L11 11L2 20" fill="none" stroke="#adb0b2" stroke-width="2.8"/></svg>
<svg class="a" style="left:127.3px;top:310.0px;" width="34" height="32" viewBox="0 0 34 32"><path d="M0 0H12L15 5H30V23H0Z" fill="#90a0ab"/></svg>
<span class="t" style="left:166.1px;top:303.20px;line-height:42px;font-size:24.5px;color:#c8c8c8;letter-spacing:0.4px">AppScope</span>
<svg class="a" style="left:88.0px;top:358.0px;" width="22" height="14" viewBox="0 0 22 14"><path d="M2 2L11 11L20 2" fill="none" stroke="#adb0b2" stroke-width="2.8"/></svg>
<svg class="a" style="left:127.3px;top:352.0px;" width="34" height="32" viewBox="0 0 34 32"><path d="M0 0H12L15 5H30V23H0Z" fill="#90a0ab"/><rect x="17" y="15" width="16" height="16" fill="#3c3f41"/><rect x="19" y="17" width="13" height="13" fill="#40b6e0"/></svg>
<span class="t" style="left:166.1px;top:345.20px;line-height:42px;font-size:24.5px;color:#c8c8c8;font-weight:bold;letter-spacing:0.4px">entry</span>
<div style="left:41px;top:387px;width:414px;height:41px;background:#514841"></div>
<svg class="a" style="left:129.5px;top:396.0px;" width="14" height="22" viewBox="0 0 14 22"><path d="M2 2L11 11L2 20" fill="none" stroke="#adb0b2" stroke-width="2.8"/></svg>
<svg class="a" style="left:164.6px;top:394.0px;" width="34" height="32" viewBox="0 0 34 32"><path d="M0 0H12L15 5H30V23H0Z" fill="#c8632d"/></svg>
<span class="t" style="left:203.5px;top:387.20px;line-height:42px;font-size:24.5px;color:#c8c8c8;letter-spacing:0.9px">build</span>
<svg class="a" style="left:125.5px;top:442.0px;" width="22" height="14" viewBox="0 0 22 14"><path d="M2 2L11 11L20 2" fill="none" stroke="#adb0b2" stroke-width="2.8"/></svg>
<svg class="a" style="left:164.6px;top:436.0px;" width="34" height="32" viewBox="0 0 34 32"><path d="M0 0H12L15 5H30V23H0Z" fill="#90a0ab"/></svg>
<span class="t" style="left:203.5px;top:429.20px;line-height:42px;font-size:24.5px;color:#c8c8c8;letter-spacing:0px">src</span>
<svg class="a" style="left:163.0px;top:484.0px;" width="22" height="14" viewBox="0 0 22 14"><path d="M2 2L11 11L20 2" fill="none" stroke="#adb0b2" stroke-width="2.8"/></svg>
<svg class="a" style="left:201.89999999999998px;top:478.0px;" width="34" height="32" viewBox="0 0 34 32"><path d="M0 0H12L15 5H30V23H0Z" fill="#90a0ab"/></svg>
<span class="t" style="left:240.89999999999998px;top:471.20px;line-height:42px;font-size:24.5px;color:#c8c8c8;letter-spacing:0.5px">main</span>
<svg class="a" style="left:200.5px;top:526.0px;" width="22" height="14" viewBox="0 0 22 14"><path d="M2 2L11 11L20 2" fill="none" stroke="#adb0b2" stroke-width="2.8"/></svg>
<svg class="a" style="left:239.2px;top:520.0px;" width="34" height="32" viewBox="0 0 34 32"><path d="M0 0H12L15 5H30V23H0Z" fill="#3d92b6"/></svg>
<span class="t" style="left:278.29999999999995px;top:513.20px;line-height:42px;font-size:24.5px;color:#c8c8c8;letter-spacing:0.3px">ets</span>
<svg class="a" style="left:163.6px;top:1399.0px;" width="32" height="32" viewBox="0 0 32 32"><path d="M13 0H25V17H5V8Z" fill="#90a0ab"/><path d="M13 0V8H5Z" fill="#3c3f41"/><path d="M13.7 1.8V8.7H6.8Z" fill="#90a0ab"/><rect x="0" y="17" width="32" height="15" fill="#40b6e0" opacity=".9"/><text x="14" y="30" font-family="Liberation Sans,sans-serif" font-size="14.5" font-weight="bold" fill="#1f4a5c" text-anchor="middle">TS</text></svg>
<span class="t" style="left:203.5px;top:1395.20px;line-height:42px;font-size:24.5px;color:#c8c8c8;letter-spacing:0.75px">hvigorfile.ts</span>
<svg class="a" style="left:167.6px;top:1443.0px;" width="24" height="30" viewBox="0 0 24 30"><path d="M9 0H21V28H1V8Z" fill="#90a0ab"/><path d="M9 0V8H1Z" fill="#3c3f41"/><path d="M9.7 1.8V8.7H2.8Z" fill="#90a0ab"/><path d="M5 12H17M5 16.5H17M5 21H13" stroke="#3c3f41" stroke-width="2"/></svg>
<span class="t" style="left:203.5px;top:1437.20px;line-height:42px;font-size:24.5px;color:#c8c8c8;letter-spacing:0.72px">obfuscation-rules.txt</span>
<svg class="a" style="left:167.6px;top:1485.0px;" width="30" height="34" viewBox="0 0 30 34"><path d="M9 0H21V28H1V8Z" fill="#90a0ab"/><path d="M9 0V8H1Z" fill="#3c3f41"/><path d="M9.7 1.8V8.7H2.8Z" fill="#90a0ab"/><circle cx="18" cy="21" r="10" fill="#3c3f41"/><text x="18" y="28" font-family="Liberation Sans,sans-serif" font-size="19" font-weight="bold" fill="#b8c0c6" text-anchor="middle">{}</text></svg>
<span class="t" style="left:203.5px;top:1479.20px;line-height:42px;font-size:24.5px;color:#c8c8c8;letter-spacing:0.55px">oh-package.json5</span>
<svg class="a" style="left:92.0px;top:1530.0px;" width="14" height="22" viewBox="0 0 14 22"><path d="M2 2L11 11L2 20" fill="none" stroke="#adb0b2" stroke-width="2.8"/></svg>
<svg class="a" style="left:127.3px;top:1528.0px;" width="34" height="32" viewBox="0 0 34 32"><path d="M0 0H12L15 5H30V23H0Z" fill="#90a0ab"/></svg>
<span class="t" style="left:166.1px;top:1521.20px;line-height:42px;font-size:24.5px;color:#c8c8c8;letter-spacing:1.0px">hvigor</span>
<div style="left:41px;top:1563px;width:414px;height:41px;background:#514841"></div>
<svg class="a" style="left:92.0px;top:1572.0px;" width="14" height="22" viewBox="0 0 14 22"><path d="M2 2L11 11L2 20" fill="none" stroke="#adb0b2" stroke-width="2.8"/></svg>
<svg class="a" style="left:127.3px;top:1570.0px;" width="34" height="32" viewBox="0 0 34 32"><path d="M0 0H12L15 5H30V23H0Z" fill="#c8632d"/></svg>
<span class="t" style="left:166.1px;top:1563.20px;line-height:42px;font-size:24.5px;color:#c8c8c8;letter-spacing:0.5px">oh_modules</span>
<svg class="a" style="left:130.8px;top:1611.0px;" width="30" height="34" viewBox="0 0 30 34"><path d="M9 0H21V28H1V8Z" fill="#90a0ab"/><path d="M9 0V8H1Z" fill="#3c3f41"/><path d="M9.7 1.8V8.7H2.8Z" fill="#90a0ab"/><circle cx="18" cy="21" r="9.5" fill="#3c3f41"/><circle cx="18" cy="21" r="6.2" fill="none" stroke="#b8c0c6" stroke-width="2"/><path d="M13.8 25.2L22.2 16.8" stroke="#b8c0c6" stroke-width="2"/></svg>
<span class="t" style="left:166.1px;top:1605.20px;line-height:42px;font-size:24.5px;color:#c8c8c8;letter-spacing:0.9px">.gitignore</span>
<svg class="a" style="left:130.8px;top:1653.0px;" width="30" height="34" viewBox="0 0 30 34"><path d="M9 0H21V28H1V8Z" fill="#90a0ab"/><path d="M9 0V8H1Z" fill="#3c3f41"/><path d="M9.7 1.8V8.7H2.8Z" fill="#90a0ab"/><circle cx="18" cy="21" r="10" fill="#3c3f41"/><text x="18" y="28" font-family="Liberation Sans,sans-serif" font-size="19" font-weight="bold" fill="#b8c0c6" text-anchor="middle">{}</text></svg>
<span class="t" style="left:166.1px;top:1647.20px;line-height:42px;font-size:24.5px;color:#c8c8c8;letter-spacing:0.85px">build-profile.json5</span>
<svg class="a" style="left:130.8px;top:1695.0px;" width="30" height="34" viewBox="0 0 30 34"><path d="M9 0H21V28H1V8Z" fill="#90a0ab"/><path d="M9 0V8H1Z" fill="#3c3f41"/><path d="M9.7 1.8V8.7H2.8Z" fill="#90a0ab"/><circle cx="18" cy="21" r="10" fill="#3c3f41"/><text x="18" y="28" font-family="Liberation Sans,sans-serif" font-size="19" font-weight="bold" fill="#b8c0c6" text-anchor="middle">{}</text></svg>
<span class="t" style="left:166.1px;top:1689.20px;line-height:42px;font-size:24.5px;color:#c8c8c8;letter-spacing:0.75px">code-linter.json5</span>
<div style="left:435px;top:177px;width:19px;height:1542px;background:rgba(255,255,255,0.13)"></div>
<div style="left:455px;top:119px;width:2565px;height:56px;background:#3c3f41"></div>
<div style="left:725px;top:119px;width:250px;height:56px;background:#4e5254"></div>
<div style="left:725px;top:170px;width:250px;height:5px;background:#6f767c"></div>
<svg class="a" style="left:474px;top:133px;" width="30" height="32" viewBox="0 0 30 32"><path d="M11 0H24V17H4V7Z" fill="#9aa7b0"/><path d="M11 0V7H4Z" fill="#3c3f41"/><path d="M11.5 1.5V8H5Z" fill="#9aa7b0" opacity=".9"/>
<rect x="0" y="17" width="30" height="15" fill="#40b6e0" opacity=".85"/><text x="15" y="30" font-family="Liberation Sans,sans-serif" font-size="14.5" font-weight="bold" fill="#1f4a5c" text-anchor="middle" textLength="26" lengthAdjust="spacingAndGlyphs">ETS</text></svg>
<span class="t" style="left:518.5px;top:130.20px;line-height:40px;font-size:24.5px;color:#c5c5c5;letter-spacing:0.1px">A_GirdNav.ets</span>
<svg class="a" style="left:694px;top:140px;" width="17" height="17" viewBox="0 0 17 17"><path d="M1 1L16 16M16 1L1 16" stroke="#6e7274" stroke-width="1.8"/></svg>
<svg class="a" style="left:743px;top:133px;" width="30" height="32" viewBox="0 0 30 32"><path d="M11 0H24V17H4V7Z" fill="#9aa7b0"/><path d="M11 0V7H4Z" fill="#3c3f41"/><path d="M11.5 1.5V8H5Z" fill="#9aa7b0" opacity=".9"/>
<rect x="0" y="17" width="30" height="15" fill="#40b6e0" opacity=".85"/><text x="15" y="30" font-family="Liberation Sans,sans-serif" font-size="14.5" font-weight="bold" fill="#1f4a5c" text-anchor="middle" textLength="26" lengthAdjust="spacingAndGlyphs">ETS</text></svg>
<span class="t" style="left:787px;top:130.20px;line-height:40px;font-size:24.5px;color:#c5c5c5;letter-spacing:0.15px">Sample2.ets</span>
<svg class="a" style="left:941px;top:140px;" width="17" height="17" viewBox="0 0 17 17"><path d="M1 1L16 16M16 1L1 16" stroke="#6e7274" stroke-width="1.8"/></svg>
<div style="left:2987px;top:133.7px;width:6.6px;height:6.6px;background:#c4c6c8;border-radius:50%"></div>
<div style="left:2987px;top:143.2px;width:6.6px;height:6.6px;background:#c4c6c8;border-radius:50%"></div>
<div style="left:2987px;top:152.7px;width:6.6px;height:6.6px;background:#c4c6c8;border-radius:50%"></div>
<div style="left:3020px;top:119px;width:7px;height:1600px;background:#3c3f41"></div>
<div style="left:3020px;top:119px;width:3px;height:1600px;background:#323537"></div>
<div style="left:110.5px;top:549.5px;width:390px;height:843.5px;border-radius:47px;background:linear-gradient(180deg,#2b2d2e 0,#2b2d2e 69%,#6f6a5e 71%,#7d786b 100%)"></div>
<div style="left:111.5px;top:550.5px;width:388px;height:841.5px;border-radius:46px;background:linear-gradient(180deg,#8d8d8d 0,#a8a8a8 0.35%,#5a5a5a 0.8%,#4c4c4c 3%,#6a6a6a 50%,#707070 69%,#d6d0c0 70%,#d2ccbc 98.6%,#e4dfd2 99.3%,#a8a291 100%)"></div>
<div style="left:114.7px;top:556.5px;width:381.1px;height:826.3px;border-radius:43px;background:#040405"></div>
<div style="left:114.4px;top:598px;width:1.2px;height:745px;background:linear-gradient(180deg,rgba(235,235,235,0),#e4e4e4 6%,#e4e4e4 94%,rgba(235,235,235,0))"></div>
<div style="left:495px;top:598px;width:1.2px;height:745px;background:linear-gradient(180deg,rgba(235,235,235,0),#e4e4e4 6%,#e4e4e4 94%,rgba(235,235,235,0))"></div>
<div style="left:115.5px;top:564px;width:379.5px;height:815.5px;border-radius:40px;background:#eff3f7"></div>
<span class="t" style="left:128.7px;top:575.5px;line-height:20px;font-size:14.2px;color:#111;-webkit-text-stroke:0.45px #111;letter-spacing:0.35px">11:02</span>
<div style="left:263.6px;top:574.6px;width:22px;height:22px;border-radius:50%;background:#050507"></div>
<div style="left:294px;top:574.6px;width:22px;height:22px;border-radius:50%;background:#050507"></div>
<div style="left:324.4px;top:574.6px;width:22px;height:22px;border-radius:50%;background:#050507"></div>
<div style="left:273.9px;top:583px;width:3.2px;height:3.2px;border-radius:50%;background:#26365f"></div>
<div style="left:334.59999999999997px;top:583px;width:3.2px;height:3.2px;border-radius:50%;background:#26365f"></div>
<svg class="a" style="left:456.5px;top:580.2px;" width="25.0" height="11.6" viewBox="0 0 25 11.6"><rect x="0.7" y="0.7" width="21.6" height="10.2" rx="2.8" fill="none" stroke="#111" stroke-width="1.3"/><rect x="23.3" y="3.8" width="1.4" height="4" rx="0.7" fill="#111"/><text x="11.4" y="9" font-family="Liberation Sans,sans-serif" font-weight="bold" font-style="italic" font-size="8.6" text-anchor="middle" fill="#111" textLength="16.5" lengthAdjust="spacingAndGlyphs">100</text></svg>
<svg class="a" style="left:441.5px;top:580.4px;" width="9.0" height="11.2" viewBox="0 0 9 11.2"><path d="M2.4 0H7.2Q9 0 9 1.8V9.4Q9 11.2 7.2 11.2H1.8Q0 11.2 0 9.4V2.4Z" fill="#111"/><rect x="3.8" y="2.6" width="1.6" height="4.2" fill="#eff3f7"/><rect x="3.8" y="7.8" width="1.6" height="1.6" fill="#eff3f7"/></svg>
<svg class="a" style="left:131.8px;top:622.0px;" width="16.0" height="16.0" viewBox="0 0 16 16"><path d="M15 8H1.6M7.6 1.6L1.2 8L7.6 14.4" fill="none" stroke="#111" stroke-width="1.7"/></svg>
<span class="t" style="left:205px;width:200px;text-align:center;top:615px;line-height:30px;font-size:17.3px;color:#1a1a1a">调用示例二</span>
<div style="left:128px;top:732px;width:354.5px;height:132px;background:#fff;border-radius:13px"></div>
<svg class="a" style="left:153.8px;top:747.3px;" width="24.4" height="24.4" viewBox="0 0 24 24"><path d="M16.5,6.08C16.5,6.08 9.66,7.79 12.94,11.56C13.91,12.67 12.69,13.67 12.69,13.67C12.69,13.67 15.14,12.42 14,10.82C12.94,9.35 12.14,8.62 16.5,6.08M12.03,7.28C16.08,4.08 14,2 14,2C14.84,5.3 11.04,6.3 9.67,8.36C8.73,9.76 10.13,11.27 12,13C11.29,11.3 8.78,9.84 12.03,7.28M9.37,17.47C6.29,18.33 11.25,20.1 15.16,18.43C14.78,18.28 14.41,18.1 14.06,17.89C12.7,18.2 11.3,18.26 9.92,18.07C8.61,17.91 9.37,17.47 9.37,17.47M14.69,15.79C12.94,16.17 11.13,16.26 9.35,16.05C8.04,15.92 8.9,15.28 8.9,15.28C5.5,16.41 10.78,17.68 15.5,16.3C15.21,16.19 14.93,16 14.69,15.79M18.11,19.09C18.11,19.09 18.68,19.56 17.5,19.92C15.22,20.6 8.07,20.81 6.09,19.95C5.38,19.64 6.72,19.21 7.14,19.12C7.37,19.06 7.6,19.04 7.83,19.04C7.04,18.5 2.7,20.14 5.64,20.6C13.61,21.9 20.18,20 18.11,19.09M15.37,14.23C15.66,14.04 15.97,13.88 16.29,13.74C16.29,13.74 14.78,14 13.27,14.14C11.67,14.3 10.06,14.32 8.46,14.2C6.11,13.89 9.75,13 9.75,13C8.65,12.97 7.57,13.26 6.63,13.83C4.57,14.83 11.72,15.28 15.37,14.23M16.27,16.65C16.25,16.69 16.23,16.72 16.19,16.75C21.2,15.44 19.36,12.11 16.96,12.94C16.83,13 16.72,13.08 16.64,13.2C16.78,13.15 16.92,13.11 17.07,13.08C18.28,12.83 20,14.7 16.27,16.65M16.4,21.26C13.39,21.78 10.31,21.82 7.28,21.4C7.28,21.4 7.74,21.78 10.09,21.93C13.69,22.16 19.22,21.8 19.35,20.1C19.38,20.11 19.12,20.75 16.4,21.26Z" fill="#2c2c2c"/></svg>
<span class="lab" style="left:116px;width:100px;top:775px;line-height:20px;font-size:12px">Java</span>
<svg class="a" style="left:246.5px;top:747.3px;" width="24.4" height="24.4" viewBox="0 0 24 24"><path d="M19.14,7.5A2.86,2.86 0 0,1 22,10.36V14.14A2.86,2.86 0 0,1 19.14,17H12C12,17.39 12.32,17.96 12.71,17.96H17V19.64A2.86,2.86 0 0,1 14.14,22.5H9.86A2.86,2.86 0 0,1 7,19.64V15.89C7,14.31 8.28,13.04 9.86,13.04H15.11C16.69,13.04 17.96,11.76 17.96,10.18V7.5H19.14M14.86,19.29C14.46,19.29 14.14,19.59 14.14,20.18C14.14,20.77 14.46,20.89 14.86,20.89A0.71,0.71 0 0,0 15.57,20.18C15.57,19.59 15.25,19.29 14.86,19.29M4.86,17.5C3.28,17.5 2,16.22 2,14.64V10.86C2,9.28 3.28,8 4.86,8H12C12,7.61 11.68,7.04 11.29,7.04H7V5.36C7,3.78 8.28,2.5 9.86,2.5H14.14C15.72,2.5 17,3.78 17,5.36V9.11C17,10.69 15.72,11.96 14.14,11.96H8.89C7.31,11.96 6.04,13.24 6.04,14.82V17.5H4.86M9.14,5.71C9.54,5.71 9.86,5.41 9.86,4.82C9.86,4.23 9.54,4.11 9.14,4.11C8.75,4.11 8.43,4.23 8.43,4.82C8.43,5.41 8.75,5.71 9.14,5.71Z" fill="#1b1b1b"/></svg>
<span class="lab" style="left:208.7px;width:100px;top:775px;line-height:20px;font-size:12px">Python</span>
<svg class="a" style="left:339.0px;top:747.3px;" width="24.4" height="24.4" viewBox="0 0 24 24"><path d="M6,22H18L12,16M21,3H3A2,2 0 0,0 1,5V17A2,2 0 0,0 3,19H7V17H3V5H21V17H17V19H21A2,2 0 0,0 23,17V5A2,2 0 0,0 21,3Z" fill="#1b1b1b"/></svg>
<span class="lab" style="left:301.2px;width:100px;top:775px;line-height:20px;font-size:12px">Vuetify</span>
<svg class="a" style="left:431.5px;top:747.3px;" width="24.4" height="24.4" viewBox="0 0 24 24"><path d="M3,4H20A2,2 0 0,1 22,6V8H18V6H5V18H14V20H3A2,2 0 0,1 1,18V6A2,2 0 0,1 3,4M17,10H23A1,1 0 0,1 24,11V21A1,1 0 0,1 23,22H17A1,1 0 0,1 16,21V11A1,1 0 0,1 17,10M18,12V19H22V12H18Z" fill="#1b1b1b"/></svg>
<span class="lab" style="left:393.7px;width:100px;top:775px;line-height:20px;font-size:12px">纯血鸿蒙</span>
<svg class="a" style="left:153.8px;top:803.8px;" width="24.4" height="24.4" viewBox="0 0 24 24"><path d="M16.5,6.08C16.5,6.08 9.66,7.79 12.94,11.56C13.91,12.67 12.69,13.67 12.69,13.67C12.69,13.67 15.14,12.42 14,10.82C12.94,9.35 12.14,8.62 16.5,6.08M12.03,7.28C16.08,4.08 14,2 14,2C14.84,5.3 11.04,6.3 9.67,8.36C8.73,9.76 10.13,11.27 12,13C11.29,11.3 8.78,9.84 12.03,7.28M9.37,17.47C6.29,18.33 11.25,20.1 15.16,18.43C14.78,18.28 14.41,18.1 14.06,17.89C12.7,18.2 11.3,18.26 9.92,18.07C8.61,17.91 9.37,17.47 9.37,17.47M14.69,15.79C12.94,16.17 11.13,16.26 9.35,16.05C8.04,15.92 8.9,15.28 8.9,15.28C5.5,16.41 10.78,17.68 15.5,16.3C15.21,16.19 14.93,16 14.69,15.79M18.11,19.09C18.11,19.09 18.68,19.56 17.5,19.92C15.22,20.6 8.07,20.81 6.09,19.95C5.38,19.64 6.72,19.21 7.14,19.12C7.37,19.06 7.6,19.04 7.83,19.04C7.04,18.5 2.7,20.14 5.64,20.6C13.61,21.9 20.18,20 18.11,19.09M15.37,14.23C15.66,14.04 15.97,13.88 16.29,13.74C16.29,13.74 14.78,14 13.27,14.14C11.67,14.3 10.06,14.32 8.46,14.2C6.11,13.89 9.75,13 9.75,13C8.65,12.97 7.57,13.26 6.63,13.83C4.57,14.83 11.72,15.28 15.37,14.23M16.27,16.65C16.25,16.69 16.23,16.72 16.19,16.75C21.2,15.44 19.36,12.11 16.96,12.94C16.83,13 16.72,13.08 16.64,13.2C16.78,13.15 16.92,13.11 17.07,13.08C18.28,12.83 20,14.7 16.27,16.65M16.4,21.26C13.39,21.78 10.31,21.82 7.28,21.4C7.28,21.4 7.74,21.78 10.09,21.93C13.69,22.16 19.22,21.8 19.35,20.1C19.38,20.11 19.12,20.75 16.4,21.26Z" fill="#2c2c2c"/></svg>
<span class="lab" style="left:116px;width:100px;top:832px;line-height:20px;font-size:12px">Java</span>
<svg class="a" style="left:246.5px;top:803.8px;" width="24.4" height="24.4" viewBox="0 0 24 24"><path d="M19.14,7.5A2.86,2.86 0 0,1 22,10.36V14.14A2.86,2.86 0 0,1 19.14,17H12C12,17.39 12.32,17.96 12.71,17.96H17V19.64A2.86,2.86 0 0,1 14.14,22.5H9.86A2.86,2.86 0 0,1 7,19.64V15.89C7,14.31 8.28,13.04 9.86,13.04H15.11C16.69,13.04 17.96,11.76 17.96,10.18V7.5H19.14M14.86,19.29C14.46,19.29 14.14,19.59 14.14,20.18C14.14,20.77 14.46,20.89 14.86,20.89A0.71,0.71 0 0,0 15.57,20.18C15.57,19.59 15.25,19.29 14.86,19.29M4.86,17.5C3.28,17.5 2,16.22 2,14.64V10.86C2,9.28 3.28,8 4.86,8H12C12,7.61 11.68,7.04 11.29,7.04H7V5.36C7,3.78 8.28,2.5 9.86,2.5H14.14C15.72,2.5 17,3.78 17,5.36V9.11C17,10.69 15.72,11.96 14.14,11.96H8.89C7.31,11.96 6.04,13.24 6.04,14.82V17.5H4.86M9.14,5.71C9.54,5.71 9.86,5.41 9.86,4.82C9.86,4.23 9.54,4.11 9.14,4.11C8.75,4.11 8.43,4.23 8.43,4.82C8.43,5.41 8.75,5.71 9.14,5.71Z" fill="#1b1b1b"/></svg>
<span class="lab" style="left:208.7px;width:100px;top:832px;line-height:20px;font-size:12px">Python</span>
<svg class="a" style="left:339.0px;top:803.8px;" width="24.4" height="24.4" viewBox="0 0 24 24"><path d="M6,22H18L12,16M21,3H3A2,2 0 0,0 1,5V17A2,2 0 0,0 3,19H7V17H3V5H21V17H17V19H21A2,2 0 0,0 23,17V5A2,2 0 0,0 21,3Z" fill="#1b1b1b"/></svg>
<span class="lab" style="left:301.2px;width:100px;top:832px;line-height:20px;font-size:12px">Vuetify</span>
<svg class="a" style="left:431.5px;top:803.8px;" width="24.4" height="24.4" viewBox="0 0 24 24"><path d="M12,2A10,10 0 0,1 22,12A10,10 0 0,1 12,22A10,10 0 0,1 2,12A10,10 0 0,1 12,2M12,4A8,8 0 0,0 4,12A8,8 0 0,0 12,20A8,8 0 0,0 20,12A8,8 0 0,0 12,4M12,10.5A1.5,1.5 0 0,1 13.5,12A1.5,1.5 0 0,1 12,13.5A1.5,1.5 0 0,1 10.5,12A1.5,1.5 0 0,1 12,10.5M7.5,10.5A1.5,1.5 0 0,1 9,12A1.5,1.5 0 0,1 7.5,13.5A1.5,1.5 0 0,1 6,12A1.5,1.5 0 0,1 7.5,10.5M16.5,10.5A1.5,1.5 0 0,1 18,12A1.5,1.5 0 0,1 16.5,13.5A1.5,1.5 0 0,1 15,12A1.5,1.5 0 0,1 16.5,10.5Z" fill="#1b1b1b"/></svg>
<span class="lab" style="left:393.7px;width:100px;top:832px;line-height:20px;font-size:12px">更多</span>
<div style="left:251px;top:1368.7px;width:108.5px;height:4.6px;border-radius:2.3px;background:#a4a9ad"></div>
<div style="left:634px;top:550px;width:746.5px;height:841px;border-radius:36px;background:#27272c"></div>
<div style="left:634px;top:550px;width:742.6px;height:841px;border-radius:36px 33px 33px 36px;background:#6a6a7c"></div>
<div style="left:635px;top:551px;width:740.6px;height:839px;border-radius:35px 32px 32px 35px;background:linear-gradient(180deg,#3a3a3e 0,#242426 1.2%,#1d1d1f 50%,#242426 98.6%,#3a3a3e 100%)"></div>
<div style="left:985px;top:549px;width:40px;height:3px;background:#2b2b2b;border-radius:0 0 20px 20px"></div>
<div style="left:985px;top:1389px;width:40px;height:3px;background:#2b2b2b;border-radius:20px 20px 0 0"></div>
<div style="left:645px;top:563px;width:725px;height:815px;border-radius:24px;background:#eff3f7"></div>
<span class="t" style="left:657.6px;top:573.5px;line-height:20px;font-size:15px;color:#111;-webkit-text-stroke:0.45px #111;letter-spacing:0.35px">11:02</span>
<div style="left:1333.3px;top:572.8px;width:22.4px;height:22.4px;border-radius:50%;background:#050507"></div>
<svg class="a" style="left:1301.265px;top:578.026px;" width="25.75" height="11.948" viewBox="0 0 25 11.6"><rect x="0.7" y="0.7" width="21.6" height="10.2" rx="2.8" fill="none" stroke="#111" stroke-width="1.3"/><rect x="23.3" y="3.8" width="1.4" height="4" rx="0.7" fill="#111"/><text x="11.4" y="9" font-family="Liberation Sans,sans-serif" font-weight="bold" font-style="italic" font-size="8.6" text-anchor="middle" fill="#111" textLength="16.5" lengthAdjust="spacingAndGlyphs">100</text></svg>
<svg class="a" style="left:1285.815px;top:578.232px;" width="9.27" height="11.536" viewBox="0 0 9 11.2"><path d="M2.4 0H7.2Q9 0 9 1.8V9.4Q9 11.2 7.2 11.2H1.8Q0 11.2 0 9.4V2.4Z" fill="#111"/><rect x="3.8" y="2.6" width="1.6" height="4.2" fill="#eff3f7"/><rect x="3.8" y="7.8" width="1.6" height="1.6" fill="#eff3f7"/></svg>
<svg class="a" style="left:661px;top:624.02px;" width="16.96" height="16.96" viewBox="0 0 16 16"><path d="M15 8H1.6M7.6 1.6L1.2 8L7.6 14.4" fill="none" stroke="#111" stroke-width="1.7"/></svg>
<span class="t" style="left:908px;width:200px;text-align:center;top:617.5px;line-height:30px;font-size:18.2px;color:#1a1a1a">调用示例二</span>
<div style="left:657.5px;top:739px;width:701.5px;height:143px;background:#fff;border-radius:14px"></div>
<svg class="a" style="left:685.1px;top:755.1px;" width="24.8" height="24.8" viewBox="0 0 24 24"><path d="M16.5,6.08C16.5,6.08 9.66,7.79 12.94,11.56C13.91,12.67 12.69,13.67 12.69,13.67C12.69,13.67 15.14,12.42 14,10.82C12.94,9.35 12.14,8.62 16.5,6.08M12.03,7.28C16.08,4.08 14,2 14,2C14.84,5.3 11.04,6.3 9.67,8.36C8.73,9.76 10.13,11.27 12,13C11.29,11.3 8.78,9.84 12.03,7.28M9.37,17.47C6.29,18.33 11.25,20.1 15.16,18.43C14.78,18.28 14.41,18.1 14.06,17.89C12.7,18.2 11.3,18.26 9.92,18.07C8.61,17.91 9.37,17.47 9.37,17.47M14.69,15.79C12.94,16.17 11.13,16.26 9.35,16.05C8.04,15.92 8.9,15.28 8.9,15.28C5.5,16.41 10.78,17.68 15.5,16.3C15.21,16.19 14.93,16 14.69,15.79M18.11,19.09C18.11,19.09 18.68,19.56 17.5,19.92C15.22,20.6 8.07,20.81 6.09,19.95C5.38,19.64 6.72,19.21 7.14,19.12C7.37,19.06 7.6,19.04 7.83,19.04C7.04,18.5 2.7,20.14 5.64,20.6C13.61,21.9 20.18,20 18.11,19.09M15.37,14.23C15.66,14.04 15.97,13.88 16.29,13.74C16.29,13.74 14.78,14 13.27,14.14C11.67,14.3 10.06,14.32 8.46,14.2C6.11,13.89 9.75,13 9.75,13C8.65,12.97 7.57,13.26 6.63,13.83C4.57,14.83 11.72,15.28 15.37,14.23M16.27,16.65C16.25,16.69 16.23,16.72 16.19,16.75C21.2,15.44 19.36,12.11 16.96,12.94C16.83,13 16.72,13.08 16.64,13.2C16.78,13.15 16.92,13.11 17.07,13.08C18.28,12.83 20,14.7 16.27,16.65M16.4,21.26C13.39,21.78 10.31,21.82 7.28,21.4C7.28,21.4 7.74,21.78 10.09,21.93C13.69,22.16 19.22,21.8 19.35,20.1C19.38,20.11 19.12,20.75 16.4,21.26Z" fill="#2c2c2c"/></svg>
<span class="lab" style="left:647.5px;width:100px;top:785px;line-height:20px;font-size:12.5px">Java</span>
<svg class="a" style="left:809.3000000000001px;top:755.1px;" width="24.8" height="24.8" viewBox="0 0 24 24"><path d="M19.14,7.5A2.86,2.86 0 0,1 22,10.36V14.14A2.86,2.86 0 0,1 19.14,17H12C12,17.39 12.32,17.96 12.71,17.96H17V19.64A2.86,2.86 0 0,1 14.14,22.5H9.86A2.86,2.86 0 0,1 7,19.64V15.89C7,14.31 8.28,13.04 9.86,13.04H15.11C16.69,13.04 17.96,11.76 17.96,10.18V7.5H19.14M14.86,19.29C14.46,19.29 14.14,19.59 14.14,20.18C14.14,20.77 14.46,20.89 14.86,20.89A0.71,0.71 0 0,0 15.57,20.18C15.57,19.59 15.25,19.29 14.86,19.29M4.86,17.5C3.28,17.5 2,16.22 2,14.64V10.86C2,9.28 3.28,8 4.86,8H12C12,7.61 11.68,7.04 11.29,7.04H7V5.36C7,3.78 8.28,2.5 9.86,2.5H14.14C15.72,2.5 17,3.78 17,5.36V9.11C17,10.69 15.72,11.96 14.14,11.96H8.89C7.31,11.96 6.04,13.24 6.04,14.82V17.5H4.86M9.14,5.71C9.54,5.71 9.86,5.41 9.86,4.82C9.86,4.23 9.54,4.11 9.14,4.11C8.75,4.11 8.43,4.23 8.43,4.82C8.43,5.41 8.75,5.71 9.14,5.71Z" fill="#1b1b1b"/></svg>
<span class="lab" style="left:771.7px;width:100px;top:785px;line-height:20px;font-size:12.5px">Python</span>
<svg class="a" style="left:933.5px;top:755.1px;" width="24.8" height="24.8" viewBox="0 0 24 24"><path d="M6,22H18L12,16M21,3H3A2,2 0 0,0 1,5V17A2,2 0 0,0 3,19H7V17H3V5H21V17H17V19H21A2,2 0 0,0 23,17V5A2,2 0 0,0 21,3Z" fill="#1b1b1b"/></svg>
<span class="lab" style="left:895.9px;width:100px;top:785px;line-height:20px;font-size:12.5px">Vuetify</span>
<svg class="a" style="left:1057.6999999999998px;top:755.1px;" width="24.8" height="24.8" viewBox="0 0 24 24"><path d="M3,4H20A2,2 0 0,1 22,6V8H18V6H5V18H14V20H3A2,2 0 0,1 1,18V6A2,2 0 0,1 3,4M17,10H23A1,1 0 0,1 24,11V21A1,1 0 0,1 23,22H17A1,1 0 0,1 16,21V11A1,1 0 0,1 17,10M18,12V19H22V12H18Z" fill="#1b1b1b"/></svg>
<span class="lab" style="left:1020.0999999999999px;width:100px;top:785px;line-height:20px;font-size:12.5px">纯血鸿蒙</span>
<svg class="a" style="left:1181.8999999999999px;top:755.1px;" width="24.8" height="24.8" viewBox="0 0 24 24"><path d="M16.5,6.08C16.5,6.08 9.66,7.79 12.94,11.56C13.91,12.67 12.69,13.67 12.69,13.67C12.69,13.67 15.14,12.42 14,10.82C12.94,9.35 12.14,8.62 16.5,6.08M12.03,7.28C16.08,4.08 14,2 14,2C14.84,5.3 11.04,6.3 9.67,8.36C8.73,9.76 10.13,11.27 12,13C11.29,11.3 8.78,9.84 12.03,7.28M9.37,17.47C6.29,18.33 11.25,20.1 15.16,18.43C14.78,18.28 14.41,18.1 14.06,17.89C12.7,18.2 11.3,18.26 9.92,18.07C8.61,17.91 9.37,17.47 9.37,17.47M14.69,15.79C12.94,16.17 11.13,16.26 9.35,16.05C8.04,15.92 8.9,15.28 8.9,15.28C5.5,16.41 10.78,17.68 15.5,16.3C15.21,16.19 14.93,16 14.69,15.79M18.11,19.09C18.11,19.09 18.68,19.56 17.5,19.92C15.22,20.6 8.07,20.81 6.09,19.95C5.38,19.64 6.72,19.21 7.14,19.12C7.37,19.06 7.6,19.04 7.83,19.04C7.04,18.5 2.7,20.14 5.64,20.6C13.61,21.9 20.18,20 18.11,19.09M15.37,14.23C15.66,14.04 15.97,13.88 16.29,13.74C16.29,13.74 14.78,14 13.27,14.14C11.67,14.3 10.06,14.32 8.46,14.2C6.11,13.89 9.75,13 9.75,13C8.65,12.97 7.57,13.26 6.63,13.83C4.57,14.83 11.72,15.28 15.37,14.23M16.27,16.65C16.25,16.69 16.23,16.72 16.19,16.75C21.2,15.44 19.36,12.11 16.96,12.94C16.83,13 16.72,13.08 16.64,13.2C16.78,13.15 16.92,13.11 17.07,13.08C18.28,12.83 20,14.7 16.27,16.65M16.4,21.26C13.39,21.78 10.31,21.82 7.28,21.4C7.28,21.4 7.74,21.78 10.09,21.93C13.69,22.16 19.22,21.8 19.35,20.1C19.38,20.11 19.12,20.75 16.4,21.26Z" fill="#2c2c2c"/></svg>
<span class="lab" style="left:1144.3px;width:100px;top:785px;line-height:20px;font-size:12.5px">Java</span>
<svg class="a" style="left:1306.1px;top:755.1px;" width="24.8" height="24.8" viewBox="0 0 24 24"><path d="M19.14,7.5A2.86,2.86 0 0,1 22,10.36V14.14A2.86,2.86 0 0,1 19.14,17H12C12,17.39 12.32,17.96 12.71,17.96H17V19.64A2.86,2.86 0 0,1 14.14,22.5H9.86A2.86,2.86 0 0,1 7,19.64V15.89C7,14.31 8.28,13.04 9.86,13.04H15.11C16.69,13.04 17.96,11.76 17.96,10.18V7.5H19.14M14.86,19.29C14.46,19.29 14.14,19.59 14.14,20.18C14.14,20.77 14.46,20.89 14.86,20.89A0.71,0.71 0 0,0 15.57,20.18C15.57,19.59 15.25,19.29 14.86,19.29M4.86,17.5C3.28,17.5 2,16.22 2,14.64V10.86C2,9.28 3.28,8 4.86,8H12C12,7.61 11.68,7.04 11.29,7.04H7V5.36C7,3.78 8.28,2.5 9.86,2.5H14.14C15.72,2.5 17,3.78 17,5.36V9.11C17,10.69 15.72,11.96 14.14,11.96H8.89C7.31,11.96 6.04,13.24 6.04,14.82V17.5H4.86M9.14,5.71C9.54,5.71 9.86,5.41 9.86,4.82C9.86,4.23 9.54,4.11 9.14,4.11C8.75,4.11 8.43,4.23 8.43,4.82C8.43,5.41 8.75,5.71 9.14,5.71Z" fill="#1b1b1b"/></svg>
<span class="lab" style="left:1268.5px;width:100px;top:785px;line-height:20px;font-size:12.5px">Python</span>
<svg class="a" style="left:685.1px;top:822.6px;" width="24.8" height="24.8" viewBox="0 0 24 24"><path d="M6,22H18L12,16M21,3H3A2,2 0 0,0 1,5V17A2,2 0 0,0 3,19H7V17H3V5H21V17H17V19H21A2,2 0 0,0 23,17V5A2,2 0 0,0 21,3Z" fill="#1b1b1b"/></svg>
<span class="lab" style="left:647.5px;width:100px;top:852.3px;line-height:20px;font-size:12.5px">Vuetify</span>
<svg class="a" style="left:809.3000000000001px;top:822.6px;" width="24.8" height="24.8" viewBox="0 0 24 24"><path d="M3,4H20A2,2 0 0,1 22,6V8H18V6H5V18H14V20H3A2,2 0 0,1 1,18V6A2,2 0 0,1 3,4M17,10H23A1,1 0 0,1 24,11V21A1,1 0 0,1 23,22H17A1,1 0 0,1 16,21V11A1,1 0 0,1 17,10M18,12V19H22V12H18Z" fill="#1b1b1b"/></svg>
<span class="lab" style="left:771.7px;width:100px;top:852.3px;line-height:20px;font-size:12.5px">纯血鸿蒙</span>
<svg class="a" style="left:933.5px;top:822.6px;" width="24.8" height="24.8" viewBox="0 0 24 24"><path d="M16.5,6.08C16.5,6.08 9.66,7.79 12.94,11.56C13.91,12.67 12.69,13.67 12.69,13.67C12.69,13.67 15.14,12.42 14,10.82C12.94,9.35 12.14,8.62 16.5,6.08M12.03,7.28C16.08,4.08 14,2 14,2C14.84,5.3 11.04,6.3 9.67,8.36C8.73,9.76 10.13,11.27 12,13C11.29,11.3 8.78,9.84 12.03,7.28M9.37,17.47C6.29,18.33 11.25,20.1 15.16,18.43C14.78,18.28 14.41,18.1 14.06,17.89C12.7,18.2 11.3,18.26 9.92,18.07C8.61,17.91 9.37,17.47 9.37,17.47M14.69,15.79C12.94,16.17 11.13,16.26 9.35,16.05C8.04,15.92 8.9,15.28 8.9,15.28C5.5,16.41 10.78,17.68 15.5,16.3C15.21,16.19 14.93,16 14.69,15.79M18.11,19.09C18.11,19.09 18.68,19.56 17.5,19.92C15.22,20.6 8.07,20.81 6.09,19.95C5.38,19.64 6.72,19.21 7.14,19.12C7.37,19.06 7.6,19.04 7.83,19.04C7.04,18.5 2.7,20.14 5.64,20.6C13.61,21.9 20.18,20 18.11,19.09M15.37,14.23C15.66,14.04 15.97,13.88 16.29,13.74C16.29,13.74 14.78,14 13.27,14.14C11.67,14.3 10.06,14.32 8.46,14.2C6.11,13.89 9.75,13 9.75,13C8.65,12.97 7.57,13.26 6.63,13.83C4.57,14.83 11.72,15.28 15.37,14.23M16.27,16.65C16.25,16.69 16.23,16.72 16.19,16.75C21.2,15.44 19.36,12.11 16.96,12.94C16.83,13 16.72,13.08 16.64,13.2C16.78,13.15 16.92,13.11 17.07,13.08C18.28,12.83 20,14.7 16.27,16.65M16.4,21.26C13.39,21.78 10.31,21.82 7.28,21.4C7.28,21.4 7.74,21.78 10.09,21.93C13.69,22.16 19.22,21.8 19.35,20.1C19.38,20.11 19.12,20.75 16.4,21.26Z" fill="#2c2c2c"/></svg>
<span class="lab" style="left:895.9px;width:100px;top:852.3px;line-height:20px;font-size:12.5px">Java</span>
<svg class="a" style="left:1057.6999999999998px;top:822.6px;" width="24.8" height="24.8" viewBox="0 0 24 24"><path d="M19.14,7.5A2.86,2.86 0 0,1 22,10.36V14.14A2.86,2.86 0 0,1 19.14,17H12C12,17.39 12.32,17.96 12.71,17.96H17V19.64A2.86,2.86 0 0,1 14.14,22.5H9.86A2.86,2.86 0 0,1 7,19.64V15.89C7,14.31 8.28,13.04 9.86,13.04H15.11C16.69,13.04 17.96,11.76 17.96,10.18V7.5H19.14M14.86,19.29C14.46,19.29 14.14,19.59 14.14,20.18C14.14,20.77 14.46,20.89 14.86,20.89A0.71,0.71 0 0,0 15.57,20.18C15.57,19.59 15.25,19.29 14.86,19.29M4.86,17.5C3.28,17.5 2,16.22 2,14.64V10.86C2,9.28 3.28,8 4.86,8H12C12,7.61 11.68,7.04 11.29,7.04H7V5.36C7,3.78 8.28,2.5 9.86,2.5H14.14C15.72,2.5 17,3.78 17,5.36V9.11C17,10.69 15.72,11.96 14.14,11.96H8.89C7.31,11.96 6.04,13.24 6.04,14.82V17.5H4.86M9.14,5.71C9.54,5.71 9.86,5.41 9.86,4.82C9.86,4.23 9.54,4.11 9.14,4.11C8.75,4.11 8.43,4.23 8.43,4.82C8.43,5.41 8.75,5.71 9.14,5.71Z" fill="#1b1b1b"/></svg>
<span class="lab" style="left:1020.0999999999999px;width:100px;top:852.3px;line-height:20px;font-size:12.5px">Python</span>
<svg class="a" style="left:1181.8999999999999px;top:822.6px;" width="24.8" height="24.8" viewBox="0 0 24 24"><path d="M6,22H18L12,16M21,3H3A2,2 0 0,0 1,5V17A2,2 0 0,0 3,19H7V17H3V5H21V17H17V19H21A2,2 0 0,0 23,17V5A2,2 0 0,0 21,3Z" fill="#1b1b1b"/></svg>
<span class="lab" style="left:1144.3px;width:100px;top:852.3px;line-height:20px;font-size:12.5px">Vuetify</span>
<svg class="a" style="left:1306.1px;top:822.6px;" width="24.8" height="24.8" viewBox="0 0 24 24"><path d="M12,2A10,10 0 0,1 22,12A10,10 0 0,1 12,22A10,10 0 0,1 2,12A10,10 0 0,1 12,2M12,4A8,8 0 0,0 4,12A8,8 0 0,0 12,20A8,8 0 0,0 20,12A8,8 0 0,0 12,4M12,10.5A1.5,1.5 0 0,1 13.5,12A1.5,1.5 0 0,1 12,13.5A1.5,1.5 0 0,1 10.5,12A1.5,1.5 0 0,1 12,10.5M7.5,10.5A1.5,1.5 0 0,1 9,12A1.5,1.5 0 0,1 7.5,13.5A1.5,1.5 0 0,1 6,12A1.5,1.5 0 0,1 7.5,10.5M16.5,10.5A1.5,1.5 0 0,1 18,12A1.5,1.5 0 0,1 16.5,13.5A1.5,1.5 0 0,1 15,12A1.5,1.5 0 0,1 16.5,10.5Z" fill="#1b1b1b"/></svg>
<span class="lab" style="left:1268.5px;width:100px;top:852.3px;line-height:20px;font-size:12.5px">更多</span>
<div style="left:912px;top:1367.6px;width:192px;height:4.8px;border-radius:2.4px;background:#a4a9ad"></div>
<div style="left:1379px;top:670px;width:1.5px;height:95px;background:#8a86c4"></div>
<div style="left:1521px;top:548.5px;width:1289.5px;height:829.5px;border-radius:57px;background:#3b3b3b"></div>
<div style="left:1523px;top:550.5px;width:1285.5px;height:825.5px;border-radius:55px;background:#727272"></div>
<div style="left:1527.5px;top:555px;width:1276.5px;height:816.5px;border-radius:51px;background:#a9a9a9"></div>
<div style="left:1529px;top:556.5px;width:1273.5px;height:813.5px;border-radius:50px;background:#101010"></div>
<div style="left:1600px;top:547.4px;width:104px;height:1.5px;background:#d8d8d8"></div>
<div style="left:1518.8px;top:640px;width:2.4px;height:46px;background:#dcdcdc"></div>
<div style="left:1550.5px;top:580px;width:1229px;height:767.5px;border-radius:11px;background:#eff3f7"></div>
<div style="left:1559.8px;top:589.8px;width:22.4px;height:22.4px;border-radius:50%;background:#060606"></div>
<span class="t" style="left:1589.3px;top:591px;line-height:20px;font-size:15.8px;color:#111;-webkit-text-stroke:0.45px #111;letter-spacing:0.35px">11:02</span>
<svg class="a" style="left:2739.04px;top:594.736px;" width="27.0" height="12.528" viewBox="0 0 25 11.6"><rect x="0.7" y="0.7" width="21.6" height="10.2" rx="2.8" fill="none" stroke="#111" stroke-width="1.3"/><rect x="23.3" y="3.8" width="1.4" height="4" rx="0.7" fill="#111"/><text x="11.4" y="9" font-family="Liberation Sans,sans-serif" font-weight="bold" font-style="italic" font-size="8.6" text-anchor="middle" fill="#111" textLength="16.5" lengthAdjust="spacingAndGlyphs">100</text></svg>
<svg class="a" style="left:2722.84px;top:594.952px;" width="9.72" height="12.096" viewBox="0 0 9 11.2"><path d="M2.4 0H7.2Q9 0 9 1.8V9.4Q9 11.2 7.2 11.2H1.8Q0 11.2 0 9.4V2.4Z" fill="#111"/><rect x="3.8" y="2.6" width="1.6" height="4.2" fill="#eff3f7"/><rect x="3.8" y="7.8" width="1.6" height="1.6" fill="#eff3f7"/></svg>
<div style="left:2145.5px;top:594.5999999999999px;width:6.4px;height:6.4px;border-radius:50%;background:#a3a6a8"></div>
<div style="left:2178.1000000000004px;top:594.5999999999999px;width:6.4px;height:6.4px;border-radius:50%;background:#a3a6a8"></div>
<div style="left:2156.8px;top:594.5px;width:16.4px;height:6.6px;border-radius:3.3px;background:#a3a6a8"></div>
<svg class="a" style="left:1568px;top:644.2px;" width="17.6" height="17.6" viewBox="0 0 16 16"><path d="M15 8H1.6M7.6 1.6L1.2 8L7.6 14.4" fill="none" stroke="#111" stroke-width="1.7"/></svg>
<span class="t" style="left:2064.7px;width:200px;text-align:center;top:638px;line-height:30px;font-size:19.4px;color:#1a1a1a">调用示例二</span>
<div style="left:1564px;top:766px;width:1203px;height:170px;background:#fff;border-radius:15px"></div>
<svg class="a" style="left:1601.7px;top:791.7px;" width="26.6" height="26.6" viewBox="0 0 24 24"><path d="M16.5,6.08C16.5,6.08 9.66,7.79 12.94,11.56C13.91,12.67 12.69,13.67 12.69,13.67C12.69,13.67 15.14,12.42 14,10.82C12.94,9.35 12.14,8.62 16.5,6.08M12.03,7.28C16.08,4.08 14,2 14,2C14.84,5.3 11.04,6.3 9.67,8.36C8.73,9.76 10.13,11.27 12,13C11.29,11.3 8.78,9.84 12.03,7.28M9.37,17.47C6.29,18.33 11.25,20.1 15.16,18.43C14.78,18.28 14.41,18.1 14.06,17.89C12.7,18.2 11.3,18.26 9.92,18.07C8.61,17.91 9.37,17.47 9.37,17.47M14.69,15.79C12.94,16.17 11.13,16.26 9.35,16.05C8.04,15.92 8.9,15.28 8.9,15.28C5.5,16.41 10.78,17.68 15.5,16.3C15.21,16.19 14.93,16 14.69,15.79M18.11,19.09C18.11,19.09 18.68,19.56 17.5,19.92C15.22,20.6 8.07,20.81 6.09,19.95C5.38,19.64 6.72,19.21 7.14,19.12C7.37,19.06 7.6,19.04 7.83,19.04C7.04,18.5 2.7,20.14 5.64,20.6C13.61,21.9 20.18,20 18.11,19.09M15.37,14.23C15.66,14.04 15.97,13.88 16.29,13.74C16.29,13.74 14.78,14 13.27,14.14C11.67,14.3 10.06,14.32 8.46,14.2C6.11,13.89 9.75,13 9.75,13C8.65,12.97 7.57,13.26 6.63,13.83C4.57,14.83 11.72,15.28 15.37,14.23M16.27,16.65C16.25,16.69 16.23,16.72 16.19,16.75C21.2,15.44 19.36,12.11 16.96,12.94C16.83,13 16.72,13.08 16.64,13.2C16.78,13.15 16.92,13.11 17.07,13.08C18.28,12.83 20,14.7 16.27,16.65M16.4,21.26C13.39,21.78 10.31,21.82 7.28,21.4C7.28,21.4 7.74,21.78 10.09,21.93C13.69,22.16 19.22,21.8 19.35,20.1C19.38,20.11 19.12,20.75 16.4,21.26Z" fill="#2c2c2c"/></svg>
<span class="lab" style="left:1565px;width:100px;top:824px;line-height:20px;font-size:13.1px">Java</span>
<svg class="a" style="left:1759.0px;top:791.7px;" width="26.6" height="26.6" viewBox="0 0 24 24"><path d="M19.14,7.5A2.86,2.86 0 0,1 22,10.36V14.14A2.86,2.86 0 0,1 19.14,17H12C12,17.39 12.32,17.96 12.71,17.96H17V19.64A2.86,2.86 0 0,1 14.14,22.5H9.86A2.86,2.86 0 0,1 7,19.64V15.89C7,14.31 8.28,13.04 9.86,13.04H15.11C16.69,13.04 17.96,11.76 17.96,10.18V7.5H19.14M14.86,19.29C14.46,19.29 14.14,19.59 14.14,20.18C14.14,20.77 14.46,20.89 14.86,20.89A0.71,0.71 0 0,0 15.57,20.18C15.57,19.59 15.25,19.29 14.86,19.29M4.86,17.5C3.28,17.5 2,16.22 2,14.64V10.86C2,9.28 3.28,8 4.86,8H12C12,7.61 11.68,7.04 11.29,7.04H7V5.36C7,3.78 8.28,2.5 9.86,2.5H14.14C15.72,2.5 17,3.78 17,5.36V9.11C17,10.69 15.72,11.96 14.14,11.96H8.89C7.31,11.96 6.04,13.24 6.04,14.82V17.5H4.86M9.14,5.71C9.54,5.71 9.86,5.41 9.86,4.82C9.86,4.23 9.54,4.11 9.14,4.11C8.75,4.11 8.43,4.23 8.43,4.82C8.43,5.41 8.75,5.71 9.14,5.71Z" fill="#1b1b1b"/></svg>
<span class="lab" style="left:1722.3px;width:100px;top:824px;line-height:20px;font-size:13.1px">Python</span>
<svg class="a" style="left:1916.3px;top:791.7px;" width="26.6" height="26.6" viewBox="0 0 24 24"><path d="M6,22H18L12,16M21,3H3A2,2 0 0,0 1,5V17A2,2 0 0,0 3,19H7V17H3V5H21V17H17V19H21A2,2 0 0,0 23,17V5A2,2 0 0,0 21,3Z" fill="#1b1b1b"/></svg>
<span class="lab" style="left:1879.6px;width:100px;top:824px;line-height:20px;font-size:13.1px">Vuetify</span>
<svg class="a" style="left:2073.6px;top:791.7px;" width="26.6" height="26.6" viewBox="0 0 24 24"><path d="M3,4H20A2,2 0 0,1 22,6V8H18V6H5V18H14V20H3A2,2 0 0,1 1,18V6A2,2 0 0,1 3,4M17,10H23A1,1 0 0,1 24,11V21A1,1 0 0,1 23,22H17A1,1 0 0,1 16,21V11A1,1 0 0,1 17,10M18,12V19H22V12H18Z" fill="#1b1b1b"/></svg>
<span class="lab" style="left:2036.9px;width:100px;top:824px;line-height:20px;font-size:13.1px">纯血鸿蒙</span>
<svg class="a" style="left:2230.8999999999996px;top:791.7px;" width="26.6" height="26.6" viewBox="0 0 24 24"><path d="M16.5,6.08C16.5,6.08 9.66,7.79 12.94,11.56C13.91,12.67 12.69,13.67 12.69,13.67C12.69,13.67 15.14,12.42 14,10.82C12.94,9.35 12.14,8.62 16.5,6.08M12.03,7.28C16.08,4.08 14,2 14,2C14.84,5.3 11.04,6.3 9.67,8.36C8.73,9.76 10.13,11.27 12,13C11.29,11.3 8.78,9.84 12.03,7.28M9.37,17.47C6.29,18.33 11.25,20.1 15.16,18.43C14.78,18.28 14.41,18.1 14.06,17.89C12.7,18.2 11.3,18.26 9.92,18.07C8.61,17.91 9.37,17.47 9.37,17.47M14.69,15.79C12.94,16.17 11.13,16.26 9.35,16.05C8.04,15.92 8.9,15.28 8.9,15.28C5.5,16.41 10.78,17.68 15.5,16.3C15.21,16.19 14.93,16 14.69,15.79M18.11,19.09C18.11,19.09 18.68,19.56 17.5,19.92C15.22,20.6 8.07,20.81 6.09,19.95C5.38,19.64 6.72,19.21 7.14,19.12C7.37,19.06 7.6,19.04 7.83,19.04C7.04,18.5 2.7,20.14 5.64,20.6C13.61,21.9 20.18,20 18.11,19.09M15.37,14.23C15.66,14.04 15.97,13.88 16.29,13.74C16.29,13.74 14.78,14 13.27,14.14C11.67,14.3 10.06,14.32 8.46,14.2C6.11,13.89 9.75,13 9.75,13C8.65,12.97 7.57,13.26 6.63,13.83C4.57,14.83 11.72,15.28 15.37,14.23M16.27,16.65C16.25,16.69 16.23,16.72 16.19,16.75C21.2,15.44 19.36,12.11 16.96,12.94C16.83,13 16.72,13.08 16.64,13.2C16.78,13.15 16.92,13.11 17.07,13.08C18.28,12.83 20,14.7 16.27,16.65M16.4,21.26C13.39,21.78 10.31,21.82 7.28,21.4C7.28,21.4 7.74,21.78 10.09,21.93C13.69,22.16 19.22,21.8 19.35,20.1C19.38,20.11 19.12,20.75 16.4,21.26Z" fill="#2c2c2c"/></svg>
<span class="lab" style="left:2194.2px;width:100px;top:824px;line-height:20px;font-size:13.1px">Java</span>
<svg class="a" style="left:2388.2px;top:791.7px;" width="26.6" height="26.6" viewBox="0 0 24 24"><path d="M19.14,7.5A2.86,2.86 0 0,1 22,10.36V14.14A2.86,2.86 0 0,1 19.14,17H12C12,17.39 12.32,17.96 12.71,17.96H17V19.64A2.86,2.86 0 0,1 14.14,22.5H9.86A2.86,2.86 0 0,1 7,19.64V15.89C7,14.31 8.28,13.04 9.86,13.04H15.11C16.69,13.04 17.96,11.76 17.96,10.18V7.5H19.14M14.86,19.29C14.46,19.29 14.14,19.59 14.14,20.18C14.14,20.77 14.46,20.89 14.86,20.89A0.71,0.71 0 0,0 15.57,20.18C15.57,19.59 15.25,19.29 14.86,19.29M4.86,17.5C3.28,17.5 2,16.22 2,14.64V10.86C2,9.28 3.28,8 4.86,8H12C12,7.61 11.68,7.04 11.29,7.04H7V5.36C7,3.78 8.28,2.5 9.86,2.5H14.14C15.72,2.5 17,3.78 17,5.36V9.11C17,10.69 15.72,11.96 14.14,11.96H8.89C7.31,11.96 6.04,13.24 6.04,14.82V17.5H4.86M9.14,5.71C9.54,5.71 9.86,5.41 9.86,4.82C9.86,4.23 9.54,4.11 9.14,4.11C8.75,4.11 8.43,4.23 8.43,4.82C8.43,5.41 8.75,5.71 9.14,5.71Z" fill="#1b1b1b"/></svg>
<span class="lab" style="left:2351.5px;width:100px;top:824px;line-height:20px;font-size:13.1px">Python</span>
<svg class="a" style="left:2545.5px;top:791.7px;" width="26.6" height="26.6" viewBox="0 0 24 24"><path d="M6,22H18L12,16M21,3H3A2,2 0 0,0 1,5V17A2,2 0 0,0 3,19H7V17H3V5H21V17H17V19H21A2,2 0 0,0 23,17V5A2,2 0 0,0 21,3Z" fill="#1b1b1b"/></svg>
<span class="lab" style="left:2508.8px;width:100px;top:824px;line-height:20px;font-size:13.1px">Vuetify</span>
<svg class="a" style="left:2702.2px;top:791.7px;" width="26.6" height="26.6" viewBox="0 0 24 24"><path d="M3,4H20A2,2 0 0,1 22,6V8H18V6H5V18H14V20H3A2,2 0 0,1 1,18V6A2,2 0 0,1 3,4M17,10H23A1,1 0 0,1 24,11V21A1,1 0 0,1 23,22H17A1,1 0 0,1 16,21V11A1,1 0 0,1 17,10M18,12V19H22V12H18Z" fill="#1b1b1b"/></svg>
<span class="lab" style="left:2665.5px;width:100px;top:824px;line-height:20px;font-size:13.1px">纯血鸿蒙</span>
<svg class="a" style="left:1601.7px;top:862.2px;" width="26.6" height="26.6" viewBox="0 0 24 24"><path d="M16.5,6.08C16.5,6.08 9.66,7.79 12.94,11.56C13.91,12.67 12.69,13.67 12.69,13.67C12.69,13.67 15.14,12.42 14,10.82C12.94,9.35 12.14,8.62 16.5,6.08M12.03,7.28C16.08,4.08 14,2 14,2C14.84,5.3 11.04,6.3 9.67,8.36C8.73,9.76 10.13,11.27 12,13C11.29,11.3 8.78,9.84 12.03,7.28M9.37,17.47C6.29,18.33 11.25,20.1 15.16,18.43C14.78,18.28 14.41,18.1 14.06,17.89C12.7,18.2 11.3,18.26 9.92,18.07C8.61,17.91 9.37,17.47 9.37,17.47M14.69,15.79C12.94,16.17 11.13,16.26 9.35,16.05C8.04,15.92 8.9,15.28 8.9,15.28C5.5,16.41 10.78,17.68 15.5,16.3C15.21,16.19 14.93,16 14.69,15.79M18.11,19.09C18.11,19.09 18.68,19.56 17.5,19.92C15.22,20.6 8.07,20.81 6.09,19.95C5.38,19.64 6.72,19.21 7.14,19.12C7.37,19.06 7.6,19.04 7.83,19.04C7.04,18.5 2.7,20.14 5.64,20.6C13.61,21.9 20.18,20 18.11,19.09M15.37,14.23C15.66,14.04 15.97,13.88 16.29,13.74C16.29,13.74 14.78,14 13.27,14.14C11.67,14.3 10.06,14.32 8.46,14.2C6.11,13.89 9.75,13 9.75,13C8.65,12.97 7.57,13.26 6.63,13.83C4.57,14.83 11.72,15.28 15.37,14.23M16.27,16.65C16.25,16.69 16.23,16.72 16.19,16.75C21.2,15.44 19.36,12.11 16.96,12.94C16.83,13 16.72,13.08 16.64,13.2C16.78,13.15 16.92,13.11 17.07,13.08C18.28,12.83 20,14.7 16.27,16.65M16.4,21.26C13.39,21.78 10.31,21.82 7.28,21.4C7.28,21.4 7.74,21.78 10.09,21.93C13.69,22.16 19.22,21.8 19.35,20.1C19.38,20.11 19.12,20.75 16.4,21.26Z" fill="#2c2c2c"/></svg>
<span class="lab" style="left:1565px;width:100px;top:894.5px;line-height:20px;font-size:13.1px">Java</span>
<svg class="a" style="left:1759.0px;top:862.2px;" width="26.6" height="26.6" viewBox="0 0 24 24"><path d="M19.14,7.5A2.86,2.86 0 0,1 22,10.36V14.14A2.86,2.86 0 0,1 19.14,17H12C12,17.39 12.32,17.96 12.71,17.96H17V19.64A2.86,2.86 0 0,1 14.14,22.5H9.86A2.86,2.86 0 0,1 7,19.64V15.89C7,14.31 8.28,13.04 9.86,13.04H15.11C16.69,13.04 17.96,11.76 17.96,10.18V7.5H19.14M14.86,19.29C14.46,19.29 14.14,19.59 14.14,20.18C14.14,20.77 14.46,20.89 14.86,20.89A0.71,0.71 0 0,0 15.57,20.18C15.57,19.59 15.25,19.29 14.86,19.29M4.86,17.5C3.28,17.5 2,16.22 2,14.64V10.86C2,9.28 3.28,8 4.86,8H12C12,7.61 11.68,7.04 11.29,7.04H7V5.36C7,3.78 8.28,2.5 9.86,2.5H14.14C15.72,2.5 17,3.78 17,5.36V9.11C17,10.69 15.72,11.96 14.14,11.96H8.89C7.31,11.96 6.04,13.24 6.04,14.82V17.5H4.86M9.14,5.71C9.54,5.71 9.86,5.41 9.86,4.82C9.86,4.23 9.54,4.11 9.14,4.11C8.75,4.11 8.43,4.23 8.43,4.82C8.43,5.41 8.75,5.71 9.14,5.71Z" fill="#1b1b1b"/></svg>
<span class="lab" style="left:1722.3px;width:100px;top:894.5px;line-height:20px;font-size:13.1px">Python</span>
<svg class="a" style="left:1916.3px;top:862.2px;" width="26.6" height="26.6" viewBox="0 0 24 24"><path d="M6,22H18L12,16M21,3H3A2,2 0 0,0 1,5V17A2,2 0 0,0 3,19H7V17H3V5H21V17H17V19H21A2,2 0 0,0 23,17V5A2,2 0 0,0 21,3Z" fill="#1b1b1b"/></svg>
<span class="lab" style="left:1879.6px;width:100px;top:894.5px;line-height:20px;font-size:13.1px">Vuetify</span>
<svg class="a" style="left:2073.6px;top:862.2px;" width="26.6" height="26.6" viewBox="0 0 24 24"><path d="M3,4H20A2,2 0 0,1 22,6V8H18V6H5V18H14V20H3A2,2 0 0,1 1,18V6A2,2 0 0,1 3,4M17,10H23A1,1 0 0,1 24,11V21A1,1 0 0,1 23,22H17A1,1 0 0,1 16,21V11A1,1 0 0,1 17,10M18,12V19H22V12H18Z" fill="#1b1b1b"/></svg>
<span class="lab" style="left:2036.9px;width:100px;top:894.5px;line-height:20px;font-size:13.1px">纯血鸿蒙</span>
<svg class="a" style="left:2230.8999999999996px;top:862.2px;" width="26.6" height="26.6" viewBox="0 0 24 24"><path d="M16.5,6.08C16.5,6.08 9.66,7.79 12.94,11.56C13.91,12.67 12.69,13.67 12.69,13.67C12.69,13.67 15.14,12.42 14,10.82C12.94,9.35 12.14,8.62 16.5,6.08M12.03,7.28C16.08,4.08 14,2 14,2C14.84,5.3 11.04,6.3 9.67,8.36C8.73,9.76 10.13,11.27 12,13C11.29,11.3 8.78,9.84 12.03,7.28M9.37,17.47C6.29,18.33 11.25,20.1 15.16,18.43C14.78,18.28 14.41,18.1 14.06,17.89C12.7,18.2 11.3,18.26 9.92,18.07C8.61,17.91 9.37,17.47 9.37,17.47M14.69,15.79C12.94,16.17 11.13,16.26 9.35,16.05C8.04,15.92 8.9,15.28 8.9,15.28C5.5,16.41 10.78,17.68 15.5,16.3C15.21,16.19 14.93,16 14.69,15.79M18.11,19.09C18.11,19.09 18.68,19.56 17.5,19.92C15.22,20.6 8.07,20.81 6.09,19.95C5.38,19.64 6.72,19.21 7.14,19.12C7.37,19.06 7.6,19.04 7.83,19.04C7.04,18.5 2.7,20.14 5.64,20.6C13.61,21.9 20.18,20 18.11,19.09M15.37,14.23C15.66,14.04 15.97,13.88 16.29,13.74C16.29,13.74 14.78,14 13.27,14.14C11.67,14.3 10.06,14.32 8.46,14.2C6.11,13.89 9.75,13 9.75,13C8.65,12.97 7.57,13.26 6.63,13.83C4.57,14.83 11.72,15.28 15.37,14.23M16.27,16.65C16.25,16.69 16.23,16.72 16.19,16.75C21.2,15.44 19.36,12.11 16.96,12.94C16.83,13 16.72,13.08 16.64,13.2C16.78,13.15 16.92,13.11 17.07,13.08C18.28,12.83 20,14.7 16.27,16.65M16.4,21.26C13.39,21.78 10.31,21.82 7.28,21.4C7.28,21.4 7.74,21.78 10.09,21.93C13.69,22.16 19.22,21.8 19.35,20.1C19.38,20.11 19.12,20.75 16.4,21.26Z" fill="#2c2c2c"/></svg>
<span class="lab" style="left:2194.2px;width:100px;top:894.5px;line-height:20px;font-size:13.1px">Java</span>
<svg class="a" style="left:2388.2px;top:862.2px;" width="26.6" height="26.6" viewBox="0 0 24 24"><path d="M19.14,7.5A2.86,2.86 0 0,1 22,10.36V14.14A2.86,2.86 0 0,1 19.14,17H12C12,17.39 12.32,17.96 12.71,17.96H17V19.64A2.86,2.86 0 0,1 14.14,22.5H9.86A2.86,2.86 0 0,1 7,19.64V15.89C7,14.31 8.28,13.04 9.86,13.04H15.11C16.69,13.04 17.96,11.76 17.96,10.18V7.5H19.14M14.86,19.29C14.46,19.29 14.14,19.59 14.14,20.18C14.14,20.77 14.46,20.89 14.86,20.89A0.71,0.71 0 0,0 15.57,20.18C15.57,19.59 15.25,19.29 14.86,19.29M4.86,17.5C3.28,17.5 2,16.22 2,14.64V10.86C2,9.28 3.28,8 4.86,8H12C12,7.61 11.68,7.04 11.29,7.04H7V5.36C7,3.78 8.28,2.5 9.86,2.5H14.14C15.72,2.5 17,3.78 17,5.36V9.11C17,10.69 15.72,11.96 14.14,11.96H8.89C7.31,11.96 6.04,13.24 6.04,14.82V17.5H4.86M9.14,5.71C9.54,5.71 9.86,5.41 9.86,4.82C9.86,4.23 9.54,4.11 9.14,4.11C8.75,4.11 8.43,4.23 8.43,4.82C8.43,5.41 8.75,5.71 9.14,5.71Z" fill="#1b1b1b"/></svg>
<span class="lab" style="left:2351.5px;width:100px;top:894.5px;line-height:20px;font-size:13.1px">Python</span>
<svg class="a" style="left:2545.5px;top:862.2px;" width="26.6" height="26.6" viewBox="0 0 24 24"><path d="M6,22H18L12,16M21,3H3A2,2 0 0,0 1,5V17A2,2 0 0,0 3,19H7V17H3V5H21V17H17V19H21A2,2 0 0,0 23,17V5A2,2 0 0,0 21,3Z" fill="#1b1b1b"/></svg>
<span class="lab" style="left:2508.8px;width:100px;top:894.5px;line-height:20px;font-size:13.1px">Vuetify</span>
<svg class="a" style="left:2702.2px;top:862.2px;" width="26.6" height="26.6" viewBox="0 0 24 24"><path d="M12,2A10,10 0 0,1 22,12A10,10 0 0,1 12,22A10,10 0 0,1 2,12A10,10 0 0,1 12,2M12,4A8,8 0 0,0 4,12A8,8 0 0,0 12,20A8,8 0 0,0 20,12A8,8 0 0,0 12,4M12,10.5A1.5,1.5 0 0,1 13.5,12A1.5,1.5 0 0,1 12,13.5A1.5,1.5 0 0,1 10.5,12A1.5,1.5 0 0,1 12,10.5M7.5,10.5A1.5,1.5 0 0,1 9,12A1.5,1.5 0 0,1 7.5,13.5A1.5,1.5 0 0,1 6,12A1.5,1.5 0 0,1 7.5,10.5M16.5,10.5A1.5,1.5 0 0,1 18,12A1.5,1.5 0 0,1 16.5,13.5A1.5,1.5 0 0,1 15,12A1.5,1.5 0 0,1 16.5,10.5Z" fill="#1b1b1b"/></svg>
<span class="lab" style="left:2665.5px;width:100px;top:894.5px;line-height:20px;font-size:13.1px">更多</span>
<div style="left:2038px;top:1335.7px;width:255px;height:4.8px;border-radius:2.4px;background:#a4a9ad"></div>
<div style="left:520.8px;top:707px;width:51px;height:526.5px;background:#fff;border-radius:7px"></div>
<div style="left:529.8px;top:719.2px;width:7.5px;height:1.6px;background:#222;border-radius:1px"></div>
<svg class="a" style="left:552.3px;top:715px;" width="10.5" height="10.5" viewBox="0 0 10.5 10.5"><path d="M0.8 0.8L9.7 9.7M9.7 0.8L0.8 9.7" stroke="#222" stroke-width="1.4" fill="none"/></svg>
<svg class="a" style="left:536.0999999999999px;top:740.2px;" width="17" height="17" viewBox="0 0 20 20"><path d="M3 4.2H17M3 10H17M3 15.8H17" fill="none" stroke="#222" stroke-width="1.4" stroke-linecap="round" stroke-linejoin="round"/></svg>
<div style="left:525.8px;top:764.3px;width:33px;height:1px;background:#ececec"></div>
<svg class="a" style="left:535.5999999999999px;top:777.0px;" width="18" height="18" viewBox="0 0 20 20"><path d="M2.5 2.5H17.5M10 17.5V6.5M5.5 11L10 6.5L14.5 11" fill="none" stroke="#222" stroke-width="1.4" stroke-linecap="round" stroke-linejoin="round"/></svg>
<svg class="a" style="left:535.5999999999999px;top:818.3px;" width="18" height="18" viewBox="0 0 20 20"><path d="M5.5 1.5V14.5H18.5M1.5 5.5H14.5V18.5" fill="none" stroke="#222" stroke-width="1.4" stroke-linecap="round" stroke-linejoin="round"/></svg>
<svg class="a" style="left:535.3499999999999px;top:860.35px;" width="18.5" height="18.5" viewBox="0 0 20 20"><path d="M4.2 5.2A8 8 0 1 1 4.6 15.6M4.2 5.2L3.6 2M4.2 5.2L1.2 6" fill="none" stroke="#222" stroke-width="1.4" stroke-linecap="round" stroke-linejoin="round"/><rect x="7.3" y="7.3" width="5.4" height="5.4" rx="1" fill="none" stroke="#222" stroke-width="1.4" stroke-linecap="round" stroke-linejoin="round"/></svg>
<svg class="a" style="left:535.3499999999999px;top:901.95px;" width="18.5" height="18.5" viewBox="0 0 20 20"><path d="M15.8 5.2A8 8 0 1 0 15.4 15.6M15.8 5.2L16.4 2M15.8 5.2L18.8 6" fill="none" stroke="#222" stroke-width="1.4" stroke-linecap="round" stroke-linejoin="round"/><rect x="7.3" y="7.3" width="5.4" height="5.4" rx="1" fill="none" stroke="#222" stroke-width="1.4" stroke-linecap="round" stroke-linejoin="round"/></svg>
<svg class="a" style="left:535.5999999999999px;top:943.4px;" width="18" height="18" viewBox="0 0 20 20"><path d="M1.5 7.5H4.5L9.5 3.2V16.8L4.5 12.5H1.5Z" fill="none" stroke="#222" stroke-width="1.4" stroke-linecap="round" stroke-linejoin="round"/><path d="M12.5 10H18.5M15.5 7V13" fill="none" stroke="#222" stroke-width="1.4" stroke-linecap="round" stroke-linejoin="round"/></svg>
<svg class="a" style="left:535.5999999999999px;top:985.0px;" width="18" height="18" viewBox="0 0 20 20"><path d="M1.5 7.5H4.5L9.5 3.2V16.8L4.5 12.5H1.5Z" fill="none" stroke="#222" stroke-width="1.4" stroke-linecap="round" stroke-linejoin="round"/><path d="M12.5 10H18.5" fill="none" stroke="#222" stroke-width="1.4" stroke-linecap="round" stroke-linejoin="round"/></svg>
<svg class="a" style="left:535.0999999999999px;top:1026.0px;" width="19" height="19" viewBox="0 0 20 20"><rect x="5.8" y="2.4" width="8.4" height="15.2" rx="1.8" transform="rotate(18 10 10)" fill="none" stroke="#222" stroke-width="1.4" stroke-linecap="round" stroke-linejoin="round"/><path d="M3.4 6.2A7.6 7.6 0 0 0 4.4 15.4M16.6 13.8A7.6 7.6 0 0 0 15.6 4.6" fill="none" stroke="#222" stroke-width="1.4" stroke-linecap="round" stroke-linejoin="round"/><path d="M8.6 14.4H10.6" transform="rotate(18 10 10)" fill="none" stroke="#222" stroke-width="1.4" stroke-linecap="round" stroke-linejoin="round"/></svg>
<div style="left:527.8px;top:1088.9px;width:33px;height:1px;background:#e6e6e6"></div>
<svg class="a" style="left:535.3499999999999px;top:1100.75px;" width="18.5" height="18.5" viewBox="0 0 20 20"><path d="M15.5 3.2V16.8L3.5 10Z" fill="none" stroke="#222" stroke-width="1.4" stroke-linecap="round" stroke-linejoin="round"/></svg>
<svg class="a" style="left:534.8499999999999px;top:1142.25px;" width="19.5" height="19.5" viewBox="0 0 20 20"><circle cx="10" cy="10" r="7.3" fill="none" stroke="#222" stroke-width="1.4" stroke-linecap="round" stroke-linejoin="round"/></svg>
<svg class="a" style="left:534.8499999999999px;top:1183.85px;" width="19.5" height="19.5" viewBox="0 0 20 20"><rect x="3.2" y="3.2" width="13.6" height="13.6" rx="2.4" fill="none" stroke="#222" stroke-width="1.4" stroke-linecap="round" stroke-linejoin="round"/></svg>
<div style="left:1400.6px;top:687px;width:51px;height:567.5px;background:#fff;border-radius:7px"></div>
<div style="left:1409.6px;top:699.2px;width:7.5px;height:1.6px;background:#222;border-radius:1px"></div>
<svg class="a" style="left:1432.1px;top:695px;" width="10.5" height="10.5" viewBox="0 0 10.5 10.5"><path d="M0.8 0.8L9.7 9.7M9.7 0.8L0.8 9.7" stroke="#222" stroke-width="1.4" fill="none"/></svg>
<svg class="a" style="left:1415.8999999999999px;top:720.2px;" width="17" height="17" viewBox="0 0 20 20"><path d="M3 4.2H17M3 10H17M3 15.8H17" fill="none" stroke="#222" stroke-width="1.4" stroke-linecap="round" stroke-linejoin="round"/></svg>
<div style="left:1405.6px;top:744.3px;width:33px;height:1px;background:#ececec"></div>
<svg class="a" style="left:1415.3999999999999px;top:757.0px;" width="18" height="18" viewBox="0 0 20 20"><path d="M2.5 2.5H17.5M10 17.5V6.5M5.5 11L10 6.5L14.5 11" fill="none" stroke="#222" stroke-width="1.4" stroke-linecap="round" stroke-linejoin="round"/></svg>
<svg class="a" style="left:1415.3999999999999px;top:798.3px;" width="18" height="18" viewBox="0 0 20 20"><path d="M5.5 1.5V14.5H18.5M1.5 5.5H14.5V18.5" fill="none" stroke="#222" stroke-width="1.4" stroke-linecap="round" stroke-linejoin="round"/></svg>
<svg class="a" style="left:1415.1499999999999px;top:840.35px;" width="18.5" height="18.5" viewBox="0 0 20 20"><path d="M4.2 5.2A8 8 0 1 1 4.6 15.6M4.2 5.2L3.6 2M4.2 5.2L1.2 6" fill="none" stroke="#222" stroke-width="1.4" stroke-linecap="round" stroke-linejoin="round"/><rect x="7.3" y="7.3" width="5.4" height="5.4" rx="1" fill="none" stroke="#222" stroke-width="1.4" stroke-linecap="round" stroke-linejoin="round"/></svg>
<svg class="a" style="left:1415.1499999999999px;top:881.95px;" width="18.5" height="18.5" viewBox="0 0 20 20"><path d="M15.8 5.2A8 8 0 1 0 15.4 15.6M15.8 5.2L16.4 2M15.8 5.2L18.8 6" fill="none" stroke="#222" stroke-width="1.4" stroke-linecap="round" stroke-linejoin="round"/><rect x="7.3" y="7.3" width="5.4" height="5.4" rx="1" fill="none" stroke="#222" stroke-width="1.4" stroke-linecap="round" stroke-linejoin="round"/></svg>
<svg class="a" style="left:1415.3999999999999px;top:923.4px;" width="18" height="18" viewBox="0 0 20 20"><path d="M1.5 7.5H4.5L9.5 3.2V16.8L4.5 12.5H1.5Z" fill="none" stroke="#222" stroke-width="1.4" stroke-linecap="round" stroke-linejoin="round"/><path d="M12.5 10H18.5M15.5 7V13" fill="none" stroke="#222" stroke-width="1.4" stroke-linecap="round" stroke-linejoin="round"/></svg>
<svg class="a" style="left:1415.3999999999999px;top:965.0px;" width="18" height="18" viewBox="0 0 20 20"><path d="M1.5 7.5H4.5L9.5 3.2V16.8L4.5 12.5H1.5Z" fill="none" stroke="#222" stroke-width="1.4" stroke-linecap="round" stroke-linejoin="round"/><path d="M12.5 10H18.5" fill="none" stroke="#222" stroke-width="1.4" stroke-linecap="round" stroke-linejoin="round"/></svg>
<svg class="a" style="left:1414.8999999999999px;top:1006.0px;" width="19" height="19" viewBox="0 0 20 20"><rect x="5.8" y="2.4" width="8.4" height="15.2" rx="1.8" transform="rotate(18 10 10)" fill="none" stroke="#222" stroke-width="1.4" stroke-linecap="round" stroke-linejoin="round"/><path d="M3.4 6.2A7.6 7.6 0 0 0 4.4 15.4M16.6 13.8A7.6 7.6 0 0 0 15.6 4.6" fill="none" stroke="#222" stroke-width="1.4" stroke-linecap="round" stroke-linejoin="round"/><path d="M8.6 14.4H10.6" transform="rotate(18 10 10)" fill="none" stroke="#222" stroke-width="1.4" stroke-linecap="round" stroke-linejoin="round"/></svg>
<svg class="a" style="left:1415.1499999999999px;top:1048.15px;" width="18.5" height="18.5" viewBox="0 0 20 20"><rect x="2.5" y="2.5" width="15" height="15" fill="none" stroke="#222" stroke-width="1.4" stroke-linecap="round" stroke-linejoin="round"/></svg>
<div style="left:1407.6px;top:1110.5px;width:33px;height:1px;background:#e6e6e6"></div>
<svg class="a" style="left:1415.1499999999999px;top:1122.35px;" width="18.5" height="18.5" viewBox="0 0 20 20"><path d="M15.5 3.2V16.8L3.5 10Z" fill="none" stroke="#222" stroke-width="1.4" stroke-linecap="round" stroke-linejoin="round"/></svg>
<svg class="a" style="left:1414.6499999999999px;top:1163.85px;" width="19.5" height="19.5" viewBox="0 0 20 20"><circle cx="10" cy="10" r="7.3" fill="none" stroke="#222" stroke-width="1.4" stroke-linecap="round" stroke-linejoin="round"/></svg>
<svg class="a" style="left:1414.6499999999999px;top:1205.45px;" width="19.5" height="19.5" viewBox="0 0 20 20"><rect x="3.2" y="3.2" width="13.6" height="13.6" rx="2.4" fill="none" stroke="#222" stroke-width="1.4" stroke-linecap="round" stroke-linejoin="round"/></svg>
<div style="left:2830.2px;top:700.6px;width:51px;height:526.5px;background:#fff;border-radius:7px"></div>
<div style="left:2839.2px;top:712.8000000000001px;width:7.5px;height:1.6px;background:#222;border-radius:1px"></div>
<svg class="a" style="left:2861.7px;top:708.6px;" width="10.5" height="10.5" viewBox="0 0 10.5 10.5"><path d="M0.8 0.8L9.7 9.7M9.7 0.8L0.8 9.7" stroke="#222" stroke-width="1.4" fill="none"/></svg>
<svg class="a" style="left:2845.5px;top:733.8000000000001px;" width="17" height="17" viewBox="0 0 20 20"><path d="M3 4.2H17M3 10H17M3 15.8H17" fill="none" stroke="#222" stroke-width="1.4" stroke-linecap="round" stroke-linejoin="round"/></svg>
<div style="left:2835.2px;top:757.9px;width:33px;height:1px;background:#ececec"></div>
<svg class="a" style="left:2845.0px;top:770.6px;" width="18" height="18" viewBox="0 0 20 20"><path d="M2.5 2.5H17.5M10 17.5V6.5M5.5 11L10 6.5L14.5 11" fill="none" stroke="#222" stroke-width="1.4" stroke-linecap="round" stroke-linejoin="round"/></svg>
<svg class="a" style="left:2845.0px;top:811.9px;" width="18" height="18" viewBox="0 0 20 20"><path d="M5.5 1.5V14.5H18.5M1.5 5.5H14.5V18.5" fill="none" stroke="#222" stroke-width="1.4" stroke-linecap="round" stroke-linejoin="round"/></svg>
<svg class="a" style="left:2844.75px;top:853.95px;" width="18.5" height="18.5" viewBox="0 0 20 20"><path d="M4.2 5.2A8 8 0 1 1 4.6 15.6M4.2 5.2L3.6 2M4.2 5.2L1.2 6" fill="none" stroke="#222" stroke-width="1.4" stroke-linecap="round" stroke-linejoin="round"/><rect x="7.3" y="7.3" width="5.4" height="5.4" rx="1" fill="none" stroke="#222" stroke-width="1.4" stroke-linecap="round" stroke-linejoin="round"/></svg>
<svg class="a" style="left:2844.75px;top:895.55px;" width="18.5" height="18.5" viewBox="0 0 20 20"><path d="M15.8 5.2A8 8 0 1 0 15.4 15.6M15.8 5.2L16.4 2M15.8 5.2L18.8 6" fill="none" stroke="#222" stroke-width="1.4" stroke-linecap="round" stroke-linejoin="round"/><rect x="7.3" y="7.3" width="5.4" height="5.4" rx="1" fill="none" stroke="#222" stroke-width="1.4" stroke-linecap="round" stroke-linejoin="round"/></svg>
<svg class="a" style="left:2845.0px;top:937.0px;" width="18" height="18" viewBox="0 0 20 20"><path d="M1.5 7.5H4.5L9.5 3.2V16.8L4.5 12.5H1.5Z" fill="none" stroke="#222" stroke-width="1.4" stroke-linecap="round" stroke-linejoin="round"/><path d="M12.5 10H18.5M15.5 7V13" fill="none" stroke="#222" stroke-width="1.4" stroke-linecap="round" stroke-linejoin="round"/></svg>
<svg class="a" style="left:2845.0px;top:978.6px;" width="18" height="18" viewBox="0 0 20 20"><path d="M1.5 7.5H4.5L9.5 3.2V16.8L4.5 12.5H1.5Z" fill="none" stroke="#222" stroke-width="1.4" stroke-linecap="round" stroke-linejoin="round"/><path d="M12.5 10H18.5" fill="none" stroke="#222" stroke-width="1.4" stroke-linecap="round" stroke-linejoin="round"/></svg>
<svg class="a" style="left:2844.5px;top:1019.5999999999999px;" width="19" height="19" viewBox="0 0 20 20"><rect x="5.8" y="2.4" width="8.4" height="15.2" rx="1.8" transform="rotate(18 10 10)" fill="none" stroke="#222" stroke-width="1.4" stroke-linecap="round" stroke-linejoin="round"/><path d="M3.4 6.2A7.6 7.6 0 0 0 4.4 15.4M16.6 13.8A7.6 7.6 0 0 0 15.6 4.6" fill="none" stroke="#222" stroke-width="1.4" stroke-linecap="round" stroke-linejoin="round"/><path d="M8.6 14.4H10.6" transform="rotate(18 10 10)" fill="none" stroke="#222" stroke-width="1.4" stroke-linecap="round" stroke-linejoin="round"/></svg>
<div style="left:2837.2px;top:1082.5px;width:33px;height:1px;background:#e6e6e6"></div>
<svg class="a" style="left:2844.75px;top:1094.35px;" width="18.5" height="18.5" viewBox="0 0 20 20"><path d="M15.5 3.2V16.8L3.5 10Z" fill="none" stroke="#222" stroke-width="1.4" stroke-linecap="round" stroke-linejoin="round"/></svg>
<svg class="a" style="left:2844.25px;top:1135.85px;" width="19.5" height="19.5" viewBox="0 0 20 20"><circle cx="10" cy="10" r="7.3" fill="none" stroke="#222" stroke-width="1.4" stroke-linecap="round" stroke-linejoin="round"/></svg>
<svg class="a" style="left:2844.25px;top:1177.45px;" width="19.5" height="19.5" viewBox="0 0 20 20"><rect x="3.2" y="3.2" width="13.6" height="13.6" rx="2.4" fill="none" stroke="#222" stroke-width="1.4" stroke-linecap="round" stroke-linejoin="round"/></svg>
</body></html>
